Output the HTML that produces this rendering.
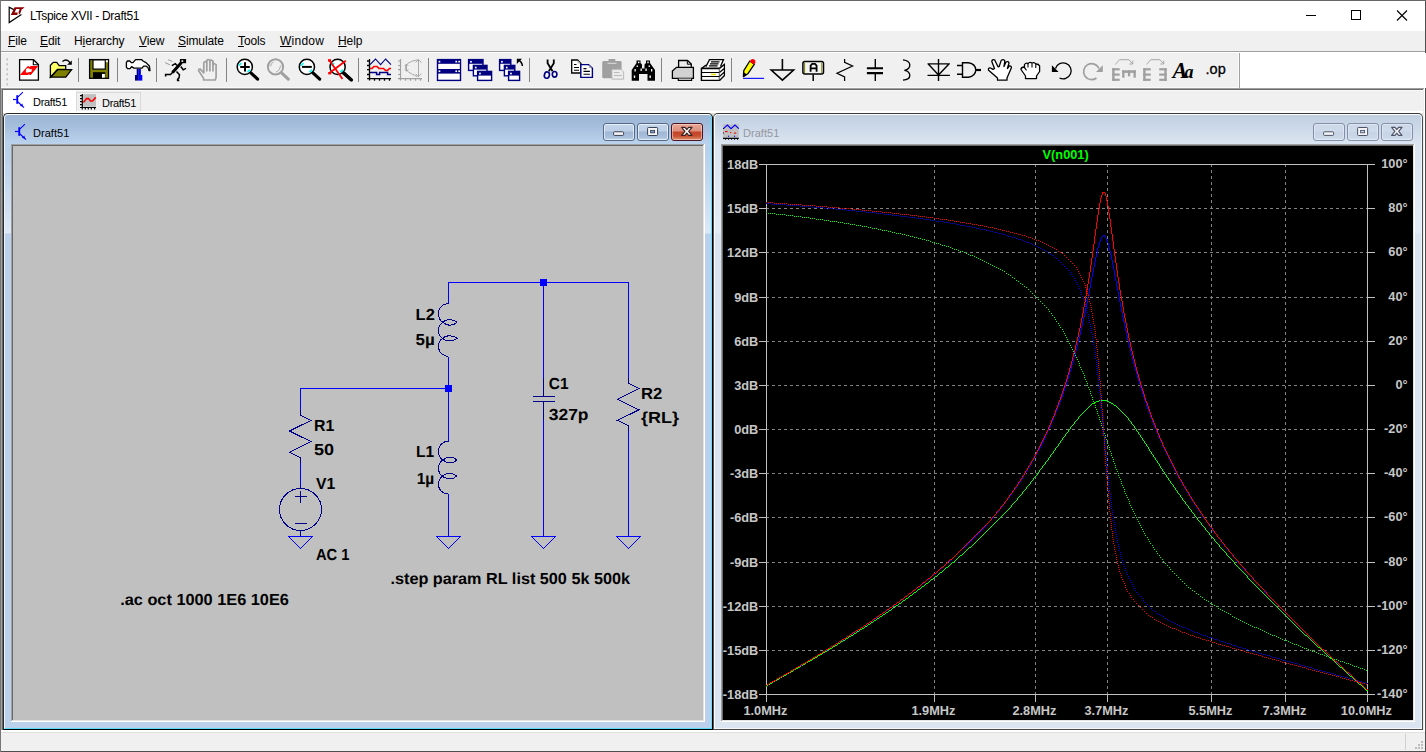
<!DOCTYPE html>
<html><head><meta charset="utf-8"><title>LTspice XVII - Draft51</title>
<style>
*{margin:0;padding:0;box-sizing:border-box}
html,body{width:1426px;height:752px;overflow:hidden;background:#f0f0f0}
body{position:relative;font-family:"Liberation Sans",sans-serif;font-size:12px;color:#000}
.abs{position:absolute}
#title{position:absolute;left:1px;top:1px;width:1424px;height:30px;background:#fff}
#title .t{position:absolute;left:29px;top:8px;font-size:12px;line-height:14px;letter-spacing:-0.3px;white-space:nowrap}
#menu{position:absolute;left:1px;top:31px;width:1424px;height:20px;background:#f0f0f0}
#menu span{position:absolute;top:3px;font-size:12px;line-height:14px;white-space:nowrap;letter-spacing:-0.1px}
#menu u{text-decoration:underline;text-underline-offset:1px}
.sep{position:absolute;top:59px;width:1px;height:24px;background:#8d8d8d}
.tabt{position:absolute;font-size:11px;line-height:13px;white-space:nowrap;letter-spacing:-0.3px}
.win{position:absolute;border:1px solid #2b2b2b;border-radius:5px 5px 0 0;overflow:hidden}
.win .hl{position:absolute;left:0;top:0;right:0;bottom:0;border:1px solid #fff;border-radius:4px 4px 0 0}
.wtitle{position:absolute;font-size:11px;line-height:13px;white-space:nowrap;letter-spacing:0.05px}
.cbtn{position:absolute;top:123px;width:32px;height:18px;border-radius:3px}

#schsvg text{font-family:"Liberation Sans",sans-serif;font-weight:bold;font-size:16px;text-rendering:geometricPrecision;fill:#000}
</style></head>
<body>
<div class="abs" style="left:0px;top:0px;width:1426px;height:752px;background:#4f4f4f;"></div>
<div class="abs" style="left:0px;top:0px;width:1426px;height:1px;background:#686868;"></div>
<div class="abs" style="left:0px;top:0px;width:1px;height:752px;background:#777;"></div>
<div class="abs" style="left:1px;top:1px;width:1424px;height:750px;background:#f0f0f0;"></div>
<div id="title"><div class="t">LTspice XVII - Draft51</div></div>
<svg class="abs" style="left:1290px;top:1px" width="135" height="30" viewBox="0 0 135 30" shape-rendering="crispEdges"><rect x="16" y="14" width="10" height="1" fill="#000"/><rect x="61.5" y="9.5" width="9" height="9" fill="none" stroke="#000" stroke-width="1"/><g shape-rendering="auto" stroke="#000" stroke-width="1.1" fill="none"><path d="M107 9.5 L117 19.5 M117 9.5 L107 19.5"/></g></svg>
<div id="menu"><span style="left:7px"><u>F</u>ile</span><span style="left:39px"><u>E</u>dit</span><span style="left:73px">H<u>i</u>erarchy</span><span style="left:138px"><u>V</u>iew</span><span style="left:177px"><u>S</u>imulate</span><span style="left:237px"><u>T</u>ools</span><span style="left:279px"><span style="position:static;letter-spacing:0.25px"><u>W</u>indow</span></span><span style="left:337px"><u>H</u>elp</span></div>
<div class="abs" style="left:1px;top:51px;width:1424px;height:1px;background:#a0a0a0;"></div>
<div class="abs" style="left:1px;top:52px;width:1424px;height:1px;background:#fff;"></div>
<div class="abs" style="left:1px;top:53px;width:1237px;height:34px;background:#f0f0f0;"></div>
<div class="abs" style="left:1px;top:87px;width:1237px;height:1px;background:#fafafa;"></div>
<div class="abs" style="left:1238px;top:53px;width:1px;height:35px;background:#fafafa;"></div>
<div class="abs" style="left:1239px;top:53px;width:1px;height:35px;background:#a0a0a0;"></div>
<div class="abs" style="left:1240px;top:53px;width:1185px;height:35px;background:#fff;"></div>
<div class="abs" style="left:1px;top:88px;width:1424px;height:1px;background:#a0a0a0;"></div>
<div class="abs" style="left:1px;top:89px;width:1424px;height:1px;background:#696969;"></div>
<div class="abs" style="left:1px;top:90px;width:1424px;height:1px;background:#f9f9f9;"></div>
<div class="abs" style="left:1px;top:89px;width:1px;height:643px;background:#a0a0a0;"></div>
<div class="abs" style="left:2px;top:90px;width:1px;height:641px;background:#696969;"></div>
<div class="abs" style="left:1424px;top:88px;width:1px;height:644px;background:#fff;"></div>
<div class="abs" style="left:1423px;top:89px;width:1px;height:642px;background:#ececec;"></div>
<div class="abs" style="left:3px;top:90px;width:73px;height:23px;background:#fff;"></div>
<div class="abs" style="left:3px;top:111px;width:1420px;height:2px;background:#fff;"></div>
<div class="abs" style="left:76px;top:92px;width:65px;height:19px;background:#f0f0f0;border:1px solid #d9d9d9;border-bottom:none"></div>
<div class="tabt" style="left:33px;top:95.5px">Draft51</div>
<div class="tabt" style="left:102px;top:97px">Draft51</div>
<div class="abs" style="left:3px;top:113px;width:1420px;height:6px;background:#e2dfd0;"></div>
<div class="win" style="left:3px;top:113px;width:710px;height:617px;background:linear-gradient(#9ab4d4 0px,#a5bedc 12px,#b3cae6 22px,#bbd2ec 30px,#b8cfea 34px,#c4d8ef 70px,#dce8f6 119px,#bad0eb 120px,#bbd1eb 616px);border-color:#2a2a2a #000 #000 #2a2a2a"><div class="hl" style="border-color:#fdfeff #5fdcfb #5fdcfb #eef5fc"></div></div><div class="abs" style="left:11px;top:144px;width:694px;height:578px;background:#fff;"></div><div class="abs" style="left:11px;top:144px;width:693px;height:577px;background:#a0a0a0;"></div><div class="abs" style="left:12px;top:145px;width:692px;height:576px;background:#e3e3e3;"></div><div class="abs" style="left:12px;top:145px;width:691px;height:575px;background:#696969;"></div>
<div class="win" style="left:713px;top:113px;width:710px;height:617px;background:linear-gradient(#bfcddf 0px,#c9d6e6 10px,#d4dfec 22px,#dce6f2 31px,#dbe5f2 34px,#e3ecf6 119px,#dae4f1 120px,#dbe5f2 616px);border-color:#3a3a3a #4a4a4a #4a4a4a #555"><div class="hl" style="border-color:#fbfdff #eef4fb #f4f8fd #fbfdff"></div></div><div class="abs" style="left:721px;top:144px;width:694px;height:578px;background:#fff;"></div><div class="abs" style="left:721px;top:144px;width:693px;height:577px;background:#a0a0a0;"></div><div class="abs" style="left:722px;top:145px;width:692px;height:576px;background:#e3e3e3;"></div><div class="abs" style="left:722px;top:145px;width:691px;height:575px;background:#696969;"></div>
<div class="abs" id="sch" style="left:13px;top:146px;width:690px;height:574px;background:#c0c0c0"></div>
<div class="abs" id="plt" style="left:723px;top:146px;width:690px;height:574px;background:#000"></div>
<div class="wtitle" style="left:33px;top:126.5px;color:#000">Draft51</div>
<div class="wtitle" style="left:743px;top:126.5px;color:#9696a0">Draft51</div>
<div class="cbtn" style="left:603px;background:linear-gradient(#c3d5ea 0%,#bccfe6 44%,#9eb7d5 50%,#a9c0dc 80%,#bdd2ea 100%);border:1px solid #566a88;box-shadow:inset 0 0 0 1px rgba(255,255,255,.6)"></div><div class="cbtn" style="left:637px;background:linear-gradient(#c3d5ea 0%,#bccfe6 44%,#9eb7d5 50%,#a9c0dc 80%,#bdd2ea 100%);border:1px solid #566a88;box-shadow:inset 0 0 0 1px rgba(255,255,255,.6)"></div><div class="cbtn" style="left:671px;background:linear-gradient(#eaa898 0%,#dd8e7c 44%,#c4432a 50%,#c8502f 75%,#dc9374 100%);border:1px solid #4a1522;box-shadow:inset 0 0 0 1px rgba(255,220,210,.55)"></div><svg class="abs" style="left:603px;top:123px" width="100" height="18" viewBox="0 0 100 18"><rect x="10.6" y="8.8" width="10" height="3.6" rx="0.8" fill="#f6f6f6" stroke="#3a4256" stroke-width="1"/><rect x="44.6" y="4.5" width="10" height="8" rx="0.8" fill="#f6f6f6" stroke="#3a4256" stroke-width="1"/><rect x="47.6" y="7.4" width="4" height="2.4" fill="#7fa0c8" stroke="#3a4256" stroke-width="0.9"/><path d="M78.6 4.4 L82 4.4 L83.8 6.6 L85.6 4.4 L89 4.4 L85.7 8.4 L89 12.4 L85.6 12.4 L83.8 10.2 L82 12.4 L78.6 12.4 L81.9 8.4 Z" fill="#f6f6f6" stroke="#3a2020" stroke-width="1.1" stroke-linejoin="round"/></svg>
<div class="cbtn" style="left:1313px;background:linear-gradient(#cbd8e8 0%,#cfdbea 44%,#c6d4e5 50%,#cad7e7 80%,#d3deeb 100%);border:1px solid #8490ab;box-shadow:inset 0 0 0 1px rgba(255,255,255,.35)"></div><div class="cbtn" style="left:1347px;background:linear-gradient(#cbd8e8 0%,#cfdbea 44%,#c6d4e5 50%,#cad7e7 80%,#d3deeb 100%);border:1px solid #8490ab;box-shadow:inset 0 0 0 1px rgba(255,255,255,.35)"></div><div class="cbtn" style="left:1381px;background:linear-gradient(#cbd8e8 0%,#cfdbea 44%,#c6d4e5 50%,#cad7e7 80%,#d3deeb 100%);border:1px solid #8490ab;box-shadow:inset 0 0 0 1px rgba(255,255,255,.35)"></div><svg class="abs" style="left:1313px;top:123px" width="100" height="18" viewBox="0 0 100 18"><rect x="10.6" y="8.8" width="10" height="3.6" rx="0.8" fill="#f4f4f6" stroke="#4c5468" stroke-width="1"/><rect x="44.6" y="4.5" width="10" height="8" rx="0.8" fill="#f4f4f6" stroke="#4c5468" stroke-width="1"/><rect x="47.6" y="7.4" width="4" height="2.4" fill="#c5d3e4" stroke="#4c5468" stroke-width="0.9"/><path d="M78.6 4.4 L82 4.4 L83.8 6.6 L85.6 4.4 L89 4.4 L85.7 8.4 L89 12.4 L85.6 12.4 L83.8 10.2 L82 12.4 L78.6 12.4 L81.9 8.4 Z" fill="#f4f4f6" stroke="#4c5468" stroke-width="1.1" stroke-linejoin="round"/></svg>
<div class="abs" style="left:1px;top:730px;width:1424px;height:2px;background:#fff;"></div>
<div class="abs" style="left:1px;top:732px;width:1424px;height:1px;background:#e0e0e0;"></div>
<div class="abs" style="left:1px;top:733px;width:1424px;height:18px;background:#f0f0f0;"></div>
<div class="abs" style="left:1405px;top:734px;width:1px;height:16px;background:#d0d0d0;"></div>
<svg class="abs" style="left:1413px;top:739px" width="12" height="12" shape-rendering="crispEdges"><g fill="#bdbdbd"><rect x="8" y="2" width="2" height="2"/><rect x="5" y="5" width="2" height="2"/><rect x="8" y="5" width="2" height="2"/><rect x="2" y="8" width="2" height="2"/><rect x="5" y="8" width="2" height="2"/><rect x="8" y="8" width="2" height="2"/></g></svg>
<svg class="abs" style="left:0;top:53px" width="1426" height="35" viewBox="0 53 1426 35">
<rect x="6.0" y="58.5" width="2.0" height="2.0" fill="#d2d2d2" stroke="none" stroke-width="1.3"/><rect x="7.0" y="58.5" width="1.0" height="1.0" fill="#b0b0b0" stroke="none" stroke-width="1.3"/>
<rect x="6.0" y="63.5" width="2.0" height="2.0" fill="#d2d2d2" stroke="none" stroke-width="1.3"/><rect x="7.0" y="63.5" width="1.0" height="1.0" fill="#b0b0b0" stroke="none" stroke-width="1.3"/>
<rect x="6.0" y="68.5" width="2.0" height="2.0" fill="#d2d2d2" stroke="none" stroke-width="1.3"/><rect x="7.0" y="68.5" width="1.0" height="1.0" fill="#b0b0b0" stroke="none" stroke-width="1.3"/>
<rect x="6.0" y="73.5" width="2.0" height="2.0" fill="#d2d2d2" stroke="none" stroke-width="1.3"/><rect x="7.0" y="73.5" width="1.0" height="1.0" fill="#b0b0b0" stroke="none" stroke-width="1.3"/>
<rect x="6.0" y="78.5" width="2.0" height="2.0" fill="#d2d2d2" stroke="none" stroke-width="1.3"/><rect x="7.0" y="78.5" width="1.0" height="1.0" fill="#b0b0b0" stroke="none" stroke-width="1.3"/>
<rect x="6.0" y="83.5" width="2.0" height="2.0" fill="#d2d2d2" stroke="none" stroke-width="1.3"/><rect x="7.0" y="83.5" width="1.0" height="1.0" fill="#b0b0b0" stroke="none" stroke-width="1.3"/>
<rect x="78.0" y="58.0" width="1.0" height="24.0" fill="#848484" stroke="none" stroke-width="1.3"/>
<rect x="117.0" y="58.0" width="1.0" height="24.0" fill="#848484" stroke="none" stroke-width="1.3"/>
<rect x="156.0" y="58.0" width="1.0" height="24.0" fill="#848484" stroke="none" stroke-width="1.3"/>
<rect x="226.0" y="58.0" width="1.0" height="24.0" fill="#848484" stroke="none" stroke-width="1.3"/>
<rect x="358.0" y="58.0" width="1.0" height="24.0" fill="#848484" stroke="none" stroke-width="1.3"/>
<rect x="428.0" y="58.0" width="1.0" height="24.0" fill="#848484" stroke="none" stroke-width="1.3"/>
<rect x="529.0" y="58.0" width="1.0" height="24.0" fill="#848484" stroke="none" stroke-width="1.3"/>
<rect x="661.0" y="58.0" width="1.0" height="24.0" fill="#848484" stroke="none" stroke-width="1.3"/>
<rect x="731.0" y="58.0" width="1.0" height="24.0" fill="#848484" stroke="none" stroke-width="1.3"/>
<path d="M19.6 59.7 H33.5 L38.4 64.6 V80.1 H19.6 Z" fill="#fff" stroke="#000" stroke-width="1.3" />
<path d="M33.3 59.9 V64.8 H38.2" fill="none" stroke="#000" stroke-width="1.1" />
<path d="M19.9 74.9 L27.5 66.2 L29.2 65.9 L28.5 67.3 L31 65.9 H38.3 L30.8 74.9 H29 L29.8 73.5 L27.8 74.9 Z M26 69.2 L27.2 68.3 H29 L30 69.2 H32.3 L31.2 72 H29.2 L28.4 72.5 H25.8 Z" fill="#ff0000" fill-rule="evenodd"/>
<path d="M50.4 77.2 V65.2 L53.3 62.4 H56.7 L59.2 65.6 H65.7 V69.5 H57.5 Z" fill="#ffff66" stroke="#000" stroke-width="1.3" />
<path d="M50.6 77.2 L57.6 69.7 H71.6 L65.8 77.2 Z" fill="#808000" stroke="#000" stroke-width="1.3" />
<path d="M62.5 61.5 Q66 58.5 69 61.5 L70.3 63.5" fill="none" stroke="#000" stroke-width="1.3" />
<path d="M67 64.8 H71.8 V60.5 Z" fill="#000"/>
<rect x="89.6" y="59.6" width="18.9" height="18.7" fill="#808000" stroke="#000" stroke-width="1.3"/>
<rect x="93.0" y="59.9" width="12.3" height="9.2" fill="#fff" stroke="#000" stroke-width="1.2"/>
<rect x="105.9" y="60.3" width="2.0" height="1.9" fill="#fff" stroke="none" stroke-width="1.3"/>
<rect x="93.0" y="72.2" width="12.3" height="5.9" fill="#000" stroke="none" stroke-width="1.3"/>
<rect x="102.0" y="73.9" width="2.9" height="3.8" fill="#fff" stroke="none" stroke-width="1.3"/>
<path d="M127.5 61 H129.8 L131.3 62.6 H133 L135.6 59.6 H141.5 L143 61 L146 62.6 L149.4 66 L150 70.6 H149 L148 67.6 L146 66.1 H143.6 L142 68.1 H134 L131.6 66.6 L130 68.6 H127.5 L126.4 67.2 V62.4 Z" fill="#fff" stroke="#000" stroke-width="1.3" stroke-linejoin="round"/>
<rect x="136.7" y="68.9" width="2.1" height="6.2" fill="#000080" stroke="none" stroke-width="1.3"/><rect x="138.8" y="68.9" width="2.1" height="6.2" fill="#0000ff" stroke="none" stroke-width="1.3"/><rect x="135.0" y="75.0" width="3.8" height="5.6" fill="#000080" stroke="none" stroke-width="1.3"/><rect x="138.8" y="75.0" width="3.5" height="5.6" fill="#0000ff" stroke="none" stroke-width="1.3"/>
<rect x="179.9" y="59.0" width="6.2" height="4.2" fill="#000" stroke="none" stroke-width="1.3"/><rect x="181.5" y="60.3" width="1.7" height="1.6" fill="#fff" stroke="none" stroke-width="1.3"/>
<path d="M181.5 62.5 L172.5 72.5" fill="none" stroke="#000" stroke-width="3.1" />
<path d="M177 65.5 L175.3 63.7 L171.8 65.6" fill="none" stroke="#000" stroke-width="1.5" />
<path d="M180.8 66.5 L183.2 69.8 L186 68.4" fill="none" stroke="#000" stroke-width="1.5" />
<path d="M173 72 L170.5 74.6 H165.6 V76.6" fill="none" stroke="#000" stroke-width="1.5" />
<path d="M176.5 71.5 L179.5 74.8 L179 77.8 L177.6 79.4 V80.4 H179.3" fill="none" stroke="#000" stroke-width="1.5" />
<path d="M168 59.6 L172.5 61.6 M165 62.6 L170 64.8" fill="none" stroke="#909090" stroke-width="0.9" />
<path d="M203.6 80 V78.4 L198.7 70.8 Q198.2 68.8 200.3 69.1 L203.8 72.8 V62.8 Q205.3 60.6 206.8 62.4 V60.4 Q208.4 58.6 209.9 60.4 V61 Q211.5 59.2 213 61.2 V64.6 Q214.6 62.8 216.1 64.8 V77.4 L215.2 80 Z" fill="none" stroke="#a0a0a0" stroke-width="1.7" stroke-linejoin="round"/>
<path d="M206.8 62.4 V71.5 M209.9 60.6 V71.5 M213 61.5 V71.5" fill="none" stroke="#a0a0a0" stroke-width="1.7" />
<circle cx="244.8" cy="66.9" r="7.6" fill="#fff" stroke="#000" stroke-width="1.5"/><path d="M238.8 65.6 l2.6 -2.4" fill="none" stroke="#00ffff" stroke-width="1.6" /><path d="M247.4 72.1 l2.8 -2.4" fill="none" stroke="#00ffff" stroke-width="1.6" /><path d="M251.1 73.1 L257.6 79.1" fill="none" stroke="#000" stroke-width="3.2" stroke-linecap="round"/>
<path d="M240.2 66.9 H249.8 M245 62.2 V71.6" fill="none" stroke="#000" stroke-width="2" />
<circle cx="275.5" cy="66.9" r="7.6" fill="none" stroke="#a0a0a0" stroke-width="2"/><path d="M270.5 66.4 q0.5 -3.5 3 -4.5 M276.0 72.1 q3.5 -1 4.5 -6.5" fill="none" stroke="#a0a0a0" stroke-width="0.9" /><path d="M281.8 73.1 L288.3 79.1" fill="none" stroke="#a0a0a0" stroke-width="3.2" stroke-linecap="round"/>
<circle cx="306.9" cy="66.9" r="7.6" fill="#fff" stroke="#000" stroke-width="1.5"/><path d="M300.9 65.6 l2.6 -2.4" fill="none" stroke="#00ffff" stroke-width="1.6" /><path d="M309.5 72.1 l2.8 -2.4" fill="none" stroke="#00ffff" stroke-width="1.6" /><path d="M313.2 73.1 L319.7 79.1" fill="none" stroke="#000" stroke-width="3.2" stroke-linecap="round"/>
<path d="M302 66.9 H311.8" fill="none" stroke="#000" stroke-width="2" />
<circle cx="337.6" cy="66.9" r="7.6" fill="#fff" stroke="#000" stroke-width="1.5"/><path d="M331.6 65.6 l2.6 -2.4" fill="none" stroke="#00ffff" stroke-width="1.6" /><path d="M340.2 72.1 l2.8 -2.4" fill="none" stroke="#00ffff" stroke-width="1.6" /><path d="M343.9 73.1 L350.4 79.1" fill="none" stroke="#000" stroke-width="3.2" stroke-linecap="round"/>
<path d="M329.5 60.5 L342.5 79 M345.8 60.8 L329.5 73" fill="none" stroke="#ff0000" stroke-width="1.8" />
<rect x="328.0" y="59.2" width="3.0" height="2.4" fill="#ff0000" stroke="none" stroke-width="1.3"/><rect x="328.2" y="72.0" width="3.0" height="2.4" fill="#ff0000" stroke="none" stroke-width="1.3"/><path d="M343.5 73 L351.5 80" fill="none" stroke="#000" stroke-width="3.2" stroke-linecap="round"/>
<path d="M369.5 59 V80.6 M367.1 78.7 H391 M367 61 h2.5 M367 65.5 h2.5 M367 69.6 h2.5 M367 74.5 h2.5 M374.5 78.7 v2 M379.5 78.7 v2 M384.5 78.7 v2 M389.5 78.7 v2" fill="none" stroke="#000" stroke-width="1.3" />
<path d="M370 64.6 L375.5 59 L380.6 64.6 L385.6 59 L391 64.6" fill="none" stroke="#000080" stroke-width="1.1" />
<path d="M370 68.4 H372 L374 66.4 H377 L379 68.4 H383.5 L385.5 70.4 H387.5 L389.5 68.4 H391" fill="none" stroke="#ff0000" stroke-width="1.5" />
<path d="M370 72.4 H376.6 V74.6 H379.6 V72.4 H387.6 V74.6 H391" fill="none" stroke="#000080" stroke-width="1.5" />
<path d="M400.5 59 V80.6 M398 78.7 H422 M398 61 h2.5 M398 65.5 h2.5 M398 69.6 h2.5 M398 74.5 h2.5 M405.5 78.7 v2 M410.5 78.7 v2 M415.5 78.7 v2 M420.5 78.7 v2" fill="none" stroke="#a0a0a0" stroke-width="1.2" />
<path d="M417.5 59.6 Q404 63 405.5 68 Q406 72 417.5 76.6 M418.5 59.6 V76.6 M415.6 62.5 L418.5 59.6 L421.4 62.5 M415.6 73.7 L418.5 76.6 L421.4 73.7 M406.5 64 V71.2 M404.6 66 L406.5 64 L408.4 66 M404.6 69.2 L406.5 71.2 L408.4 69.2" fill="none" stroke="#a0a0a0" stroke-width="0.9" />
<rect x="437.5" y="59.6" width="23.0" height="20.8" fill="#fff" stroke="#000080" stroke-width="1.4"/>
<rect x="437.5" y="59.6" width="23.0" height="4.2" fill="#000080" stroke="none" stroke-width="1.3"/><rect x="437.5" y="69.0" width="23.0" height="4.6" fill="#000080" stroke="none" stroke-width="1.3"/>
<rect x="438.6" y="60.8" width="1.7" height="1.7" fill="#fff" stroke="none" stroke-width="1.3"/><rect x="455.4" y="60.8" width="1.7" height="1.7" fill="#fff" stroke="none" stroke-width="1.3"/><rect x="458.3" y="60.8" width="1.7" height="1.7" fill="#fff" stroke="none" stroke-width="1.3"/>
<rect x="438.6" y="70.4" width="1.7" height="1.7" fill="#fff" stroke="none" stroke-width="1.3"/><rect x="455.4" y="70.4" width="1.7" height="1.7" fill="#fff" stroke="none" stroke-width="1.3"/><rect x="458.3" y="70.4" width="1.7" height="1.7" fill="#fff" stroke="none" stroke-width="1.3"/>
<rect x="468.6" y="59.6" width="14.4" height="10.8" fill="#fff" stroke="#000080" stroke-width="1.4"/><rect x="468.6" y="59.6" width="14.4" height="4.2" fill="#000080" stroke="none" stroke-width="1.3"/><rect x="470.1" y="60.9" width="1.7" height="1.7" fill="#fff" stroke="none" stroke-width="1.3"/><rect x="473.4" y="65.4" width="13.6" height="10.4" fill="#fff" stroke="#000080" stroke-width="1.4"/><rect x="473.4" y="65.4" width="13.6" height="4.2" fill="#000080" stroke="none" stroke-width="1.3"/><rect x="474.9" y="66.7" width="1.7" height="1.7" fill="#fff" stroke="none" stroke-width="1.3"/><rect x="477.6" y="71.4" width="14.0" height="9.0" fill="#fff" stroke="#000080" stroke-width="1.4"/><rect x="477.6" y="71.4" width="14.0" height="4.2" fill="#000080" stroke="none" stroke-width="1.3"/><rect x="479.1" y="72.7" width="1.7" height="1.7" fill="#fff" stroke="none" stroke-width="1.3"/>
<rect x="499.6" y="59.6" width="11.2" height="10.8" fill="#fff" stroke="#000080" stroke-width="1.4"/><rect x="499.6" y="59.6" width="11.2" height="4.2" fill="#000080" stroke="none" stroke-width="1.3"/><rect x="501.1" y="60.9" width="1.7" height="1.7" fill="#fff" stroke="none" stroke-width="1.3"/><rect x="504.4" y="65.4" width="10.4" height="10.4" fill="#fff" stroke="#000080" stroke-width="1.4"/><rect x="504.4" y="65.4" width="10.4" height="4.2" fill="#000080" stroke="none" stroke-width="1.3"/><rect x="505.9" y="66.7" width="1.7" height="1.7" fill="#fff" stroke="none" stroke-width="1.3"/><rect x="508.6" y="71.4" width="11.0" height="9.0" fill="#fff" stroke="#000080" stroke-width="1.4"/><rect x="508.6" y="71.4" width="11.0" height="4.2" fill="#000080" stroke="none" stroke-width="1.3"/><rect x="510.1" y="72.7" width="1.7" height="1.7" fill="#fff" stroke="none" stroke-width="1.3"/>
<path d="M518 60 Q522 61.5 522.4 66" fill="none" stroke="#000" stroke-width="1.5" /><path d="M516.8 58.8 H522 L516.8 64 Z" fill="#000"/>
<path d="M547.6 59.5 V63.2 L552.6 71.2 M553.8 59.5 V63.2 L548.8 71.2" fill="none" stroke="#000" stroke-width="1.8" />
<ellipse cx="546.9" cy="75.1" rx="2.5" ry="3.2" fill="#f4f4f4" stroke="#000080" stroke-width="1.6" transform="rotate(15 547 75)"/><ellipse cx="554.6" cy="74.3" rx="2.3" ry="2.8" fill="#f4f4f4" stroke="#000080" stroke-width="1.6"/>
<path d="M571.7 60 H577.5 L581 63.5 V73 H571.7 Z" fill="#fff" stroke="#000" stroke-width="1.3" /><path d="M574 64.5 h2.5 M574 67.5 h5 M574 70.3 h5" fill="none" stroke="#000" stroke-width="1.1" />
<path d="M577.7 60.3 V63.3 H580.7 Z" fill="#b0b0b0"/>
<path d="M580.8 64.6 H588.6 L592.4 68.2 V77.4 H580.8 Z" fill="#fff" stroke="#000080" stroke-width="1.4" /><path d="M583.5 68.6 h3 M583.5 71.4 h6.4 M583.5 74.3 h6.4" fill="none" stroke="#000" stroke-width="1.1" />
<path d="M589 65 V68 H592 Z" fill="#b0b0b0"/>
<rect x="602.2" y="61" width="19.4" height="17.2" rx="1.5" fill="#a0a0a0"/><rect x="608.5" y="59.0" width="6.8" height="3.0" fill="#a0a0a0" stroke="none" stroke-width="1.3"/><path d="M607.5 63.3 h9" fill="none" stroke="#e4e4e4" stroke-width="0.9" />
<path d="M611.9 69.3 H621 L623.6 71.8 V79.2 H611.9 Z" fill="#ececec" stroke="#b4b4b4" stroke-width="0.9" /><path d="M614 72.5 h5.5 M614 75.5 h8" fill="none" stroke="#b4b4b4" stroke-width="0.9" />
<path d="M636.5 60.5 H640.5 V63 L642 64.5 V68.5 H644.5 V64.5 L646 63 V60.5 H650 V63 L655 70 V80.8 H647.5 V74 H639 V80.8 H631.7 V70 L636.5 63 Z" fill="#000"/>
<rect x="638.0" y="61.6" width="1.4" height="1.6" fill="#fff" stroke="none" stroke-width="1.3"/><rect x="647.3" y="61.6" width="1.4" height="1.6" fill="#fff" stroke="none" stroke-width="1.3"/><rect x="636.6" y="65.5" width="1.3" height="1.5" fill="#fff" stroke="none" stroke-width="1.3"/><rect x="648.6" y="65.5" width="1.3" height="1.5" fill="#fff" stroke="none" stroke-width="1.3"/><rect x="634.5" y="69.0" width="1.3" height="2.5" fill="#fff" stroke="none" stroke-width="1.3"/><rect x="640.5" y="68.5" width="1.3" height="2.5" fill="#fff" stroke="none" stroke-width="1.3"/><rect x="645.4" y="68.5" width="1.3" height="2.5" fill="#fff" stroke="none" stroke-width="1.3"/><rect x="651.0" y="69.0" width="1.3" height="2.5" fill="#fff" stroke="none" stroke-width="1.3"/><rect x="633.8" y="75.5" width="1.4" height="2.4" fill="#fff" stroke="none" stroke-width="1.3"/><rect x="649.5" y="75.5" width="1.4" height="2.4" fill="#fff" stroke="none" stroke-width="1.3"/>
<path d="M678.6 67 V60.5 H687.5 L691.3 64 V67" fill="#ececec" stroke="#000" stroke-width="1.3" />
<path d="M672.4 71 L676.5 67.3 H693.4 V78.4 H672.4 Z" fill="#d2d2d2" stroke="#000" stroke-width="1.3" />
<path d="M678.3 78.6 V80.4 H691.6 V78.6" fill="#fff" stroke="#000" stroke-width="1.2" /><path d="M687.3 60.8 V64.2 H691" fill="none" stroke="#000" stroke-width="1" />
<path d="M706 66.5 L709.5 59.6 H723.5 L720.5 66.5" fill="#fff" stroke="#000" stroke-width="1.3" /><path d="M711 61.8 h8.5 M710 63.8 h8.5 M709 65.8 h8.5" fill="none" stroke="#000" stroke-width="1.2" />
<path d="M701.5 68.5 L705.5 65.5 H707 M719.5 68.5 L724.4 64.5 V75.5 L719.5 80.4 H701.5 V68.5 H719.5 V80.4 M701.5 72.5 H719.5 L724.4 68 M701.5 76.5 H719.5 L724.4 72" fill="none" stroke="#000" stroke-width="1.3" />
<path d="M701.5 68.5 H719.5 V80.4 H701.5 Z" fill="#fff" stroke="#000" stroke-width="1.3" /><path d="M701.5 72.5 H719.5 M701.5 76.5 H719.5" fill="none" stroke="#000" stroke-width="1.2" /><path d="M719.5 68.5 L724.4 64.5 V75.5 L719.5 80.4 M719.5 72.5 L724.4 68.3 M719.5 76.5 L724.4 72" fill="#fff" stroke="#000" stroke-width="1.2" />
<rect x="711.0" y="73.7" width="5.0" height="1.5" fill="#e8e000" stroke="none" stroke-width="1.3"/>
<path d="M749.8 61 L754.4 64.2 L747.8 73.8 L743.4 76.6 L743.8 70.6 Z" fill="#ffff00" stroke="#000" stroke-width="1.3" stroke-linejoin="round"/>
<path d="M743.4 76.8 L743.7 72.2 L747 74.4 Z" fill="#000"/>
<path d="M749.6 61.6 L751.2 59.4 Q753.5 58.4 755.2 60.5 L755.4 62.6 L754.2 64.6 Z" fill="#ff0000"/>
<rect x="743.1" y="77.8" width="21.0" height="1.1" fill="#0000ff" stroke="none" stroke-width="1.3"/>
<path d="M782.4 59 V70 M771.2 70 H793.6 L782.4 80.2 Z" fill="none" stroke="#000" stroke-width="1.6" stroke-linejoin="miter"/>
<rect x="802.9" y="61.4" width="20.6" height="12.6" rx="2" fill="#f4f4f4" stroke="#000" stroke-width="1.5"/>
<path d="M804.6 62.5 V73 M821.8 62.5 V73" fill="none" stroke="#808000" stroke-width="1" />
<path d="M813.2 74.5 V80.9" fill="none" stroke="#000" stroke-width="1.5" />
<path d="M810.6 71.8 V65.6 L812.2 63.9 H815 L816.6 65.6 V71.8 M810.6 68.3 H816.6" fill="none" stroke="#000" stroke-width="1.8" />
<path d="M844.6 59 V62.3 L852.6 66 L837 73.3 L844.6 76.9 V80.9" fill="none" stroke="#000" stroke-width="1.25" />
<path d="M875.3 59 V68 M875.3 73 V80.9" fill="none" stroke="#000" stroke-width="1.4" /><path d="M866.9 68.2 H883 M866.9 73.1 H883" fill="none" stroke="#000" stroke-width="2.1" />
<path d="M903 59.8 Q909.8 60.6 909.8 65 Q909.8 69.4 904.4 70.3 Q909.8 71.2 909.8 75.6 Q909.8 79.6 903 80.2" fill="none" stroke="#000" stroke-width="1.35" />
<path d="M938.5 59 V80.9 M927.5 63.9 H949.9 M927.5 75.4 H949.9 M928.5 64.2 L938.5 75 L948.7 64.2" fill="none" stroke="#000" stroke-width="1.4" />
<path d="M962.5 62.8 H968.5 Q975.5 64 975.8 70 Q975.5 76 968.5 77.2 H962.5 Z" fill="none" stroke="#000" stroke-width="1.4" /><path d="M957 65.5 H962.5 M957 74.2 H962.5" fill="none" stroke="#000" stroke-width="1.4" /><path d="M975.8 70 H981" fill="none" stroke="#000" stroke-width="2.2" />
<path d="M997.5 80.2 V78 L988.6 70.2 Q987.8 68 990 67.8 L993 69.4 L994.5 68.5 L991.8 61.5 Q992 59 994.6 59.8 L998 66.8 L999.2 66.5 L1001.2 60.4 Q1003.5 58.6 1004.8 60.8 L1004 66.5 L1006 62 Q1008.2 60.8 1009 63 L1007.4 68.5 L1009.3 66 Q1011.4 65.6 1011.4 67.8 L1007 78 V80.2 Z" fill="#fff" stroke="#000" stroke-width="1.3" stroke-linejoin="round"/>
<path d="M1025.5 78.6 V76 L1021 69.5 Q1021 67.5 1023.5 67 L1024.5 67.6 V64.5 Q1026 62.3 1028 63.6 Q1029.6 61.4 1032 63 Q1034.5 61.8 1035.8 64 Q1038.6 63.8 1039.6 66 V71.5 L1036.5 76 V78.6 Z" fill="#fff" stroke="#000" stroke-width="1.3" stroke-linejoin="round"/>
<path d="M1028 63.8 V67.5 M1032 63.2 V67.5 M1035.8 64.2 V68 M1024.5 67.6 L1026.5 70.3" fill="none" stroke="#000" stroke-width="1.1" />
<path d="M1055.5 68.5 A8 8 0 1 1 1059.5 78" fill="none" stroke="#000" stroke-width="1.3" /><path d="M1051.9 65.2 V72 H1058.6 Z" fill="#000"/>
<path d="M1099 68.5 A8 8 0 1 0 1096.5 78" fill="none" stroke="#a0a0a0" stroke-width="1.7" /><path d="M1102.8 65.2 V72 H1096 Z" fill="#a0a0a0"/>
<rect x="1112.2" y="68.2" width="2.4" height="12.7" fill="#a0a0a0" stroke="none" stroke-width="1.3"/><rect x="1112.2" y="68.2" width="7.5" height="2.2" fill="#a0a0a0" stroke="none" stroke-width="1.3"/><rect x="1112.2" y="73.5" width="7.5" height="2.2" fill="#a0a0a0" stroke="none" stroke-width="1.3"/><rect x="1112.2" y="78.7" width="7.5" height="2.2" fill="#a0a0a0" stroke="none" stroke-width="1.3"/>
<rect x="1122.2" y="70.3" width="13.6" height="2.6" fill="#a0a0a0" stroke="none" stroke-width="1.3"/><rect x="1122.2" y="70.3" width="2.3" height="7.4" fill="#a0a0a0" stroke="none" stroke-width="1.3"/><rect x="1127.9" y="70.3" width="2.3" height="6.0" fill="#a0a0a0" stroke="none" stroke-width="1.3"/><rect x="1133.5" y="70.3" width="2.3" height="7.4" fill="#a0a0a0" stroke="none" stroke-width="1.3"/>
<path d="M1115.3 64.5 L1119.5 59.7 H1129 L1132.6 63.8 M1132.8 60.6 V64 H1129.2" fill="none" stroke="#a0a0a0" stroke-width="0.9" />
<rect x="1143.2" y="68.2" width="2.4" height="12.7" fill="#a0a0a0" stroke="none" stroke-width="1.3"/><rect x="1143.2" y="68.2" width="7.5" height="2.2" fill="#a0a0a0" stroke="none" stroke-width="1.3"/><rect x="1143.2" y="73.5" width="7.5" height="2.2" fill="#a0a0a0" stroke="none" stroke-width="1.3"/><rect x="1143.2" y="78.7" width="7.5" height="2.2" fill="#a0a0a0" stroke="none" stroke-width="1.3"/><rect x="1164.3" y="68.2" width="2.4" height="12.7" fill="#a0a0a0" stroke="none" stroke-width="1.3"/><rect x="1159.2" y="68.2" width="7.5" height="2.2" fill="#a0a0a0" stroke="none" stroke-width="1.3"/><rect x="1159.2" y="73.5" width="7.5" height="2.2" fill="#a0a0a0" stroke="none" stroke-width="1.3"/><rect x="1159.2" y="78.7" width="7.5" height="2.2" fill="#a0a0a0" stroke="none" stroke-width="1.3"/>
<path d="M1146.5 64.5 L1150.7 59.7 H1160 L1163.6 63.8 M1163.8 60.6 V64 H1160.2" fill="none" stroke="#a0a0a0" stroke-width="0.9" />
<text x="1172.6" y="77.8" font-family="Liberation Serif,serif" font-weight="bold" font-style="italic" font-size="22.5" fill="#000">A<tspan dx="-3.2" font-size="18">a</tspan></text>
<text x="1205.6" y="73.9" font-family="Liberation Sans,sans-serif" font-size="14.5" fill="#000" stroke="#000" stroke-width="0.3">.op</text>
</svg>
<svg class="abs" style="left:0;top:0" width="160" height="145" viewBox="0 0 160 145">
<path d="M13.8 9.6 L9.2 7.2 V22.6 L21.4 14.6" fill="none" stroke="#000" stroke-width="1.2" />
<path d="M14.6 7.2 H17 L14.6 12.4 L17.6 12.6 L17.4 14.9 H10.8 Z M16.8 7.2 H24.6 L22.6 8.9 H21.9 L19.8 14.6 L18.4 13 L19.6 8.9 H16.2 Z" fill="#8b0000"/>
<path d="M13.0 99.5 H16.6" fill="none" stroke="#0000ff" stroke-width="1.2" /><rect x="16.3" y="95.2" width="1.9" height="8.6" fill="#0000ff" stroke="none" stroke-width="1.3"/><path d="M18.0 96.8 L22.9 92.2 M18.0 102.0 L24.0 107.6" fill="none" stroke="#0000ff" stroke-width="1.1" /><path d="M23.0 106.6 l-3.2 -0.6 l2.6 -2.6 Z" fill="#0000ff"/>
<path d="M15.0 131.5 H18.6" fill="none" stroke="#0000ff" stroke-width="1.2" /><rect x="18.3" y="127.2" width="1.9" height="8.6" fill="#0000ff" stroke="none" stroke-width="1.3"/><path d="M20.0 128.8 L24.9 124.2 M20.0 134.0 L26.0 139.6" fill="none" stroke="#0000ff" stroke-width="1.1" /><path d="M25.0 138.6 l-3.2 -0.6 l2.6 -2.6 Z" fill="#0000ff"/>
<rect x="83.2" y="94.1" width="12.8" height="12.6" fill="#c0c0c0" stroke="none" stroke-width="1.3"/>
<path d="M82.3 94 V109.6 M80 107.5 H96 M80 95.6 h2.3 M80 98.6 h2.3 M80 101.6 h2.3 M80 104.6 h2.3 M85.3 107.5 v2.1 M88.3 107.5 v2.1 M91.3 107.5 v2.1 M94.6 107.5 v2.1" fill="none" stroke="#000" stroke-width="1.2" />
<path d="M83.4 102.6 L86.5 98.6 H88.5 L90.5 101 H92.5 L95.8 97.4" fill="none" stroke="#ff0000" stroke-width="1.6" />
</svg>
<svg class="abs" style="left:720px;top:120px" width="24" height="24" viewBox="720 120 24 24">
<rect x="723.0" y="124.1" width="15.8" height="14.0" fill="#c0c0c0" stroke="none" stroke-width="1.3"/>
<path d="M723.4 128.6 L727.4 125 L731 128.6 L735 125 L738.8 128.6" fill="none" stroke="#0000ff" stroke-width="1.2" />
<rect x="725.0" y="131.0" width="2.6" height="1.1" fill="#ff0000" stroke="none" stroke-width="1.3"/><rect x="730.0" y="132.0" width="1.2" height="1.1" fill="#ff0000" stroke="none" stroke-width="1.3"/><rect x="734.0" y="132.5" width="2.2" height="1.1" fill="#ff0000" stroke="none" stroke-width="1.3"/><rect x="728.0" y="135.7" width="1.1" height="1.1" fill="#0000ff" stroke="none" stroke-width="1.3"/><rect x="734.0" y="135.7" width="1.1" height="1.1" fill="#0000ff" stroke="none" stroke-width="1.3"/><rect x="723.0" y="128.0" width="1.0" height="1.0" fill="#000" stroke="none" stroke-width="1.3"/><rect x="723.0" y="132.5" width="1.0" height="1.0" fill="#000" stroke="none" stroke-width="1.3"/>
<path d="M723 138.4 H738.8 M725 139.3 h1 M728 139.3 h1 M731 139.3 h1 M734 139.3 h1 M737 139.3 h1" fill="none" stroke="#000" stroke-width="1.1" />
</svg>
<svg id="schsvg" class="abs" style="left:12px;top:146px" width="691" height="574" viewBox="12 146 691 574" shape-rendering="crispEdges">
<rect x="448" y="282" width="181" height="1" fill="#0000ff"/>
<rect x="448" y="282" width="1" height="21" fill="#0000ff"/>
<rect x="448" y="357" width="1" height="32" fill="#0000ff"/>
<rect x="448" y="388" width="1" height="53" fill="#0000ff"/>
<rect x="448" y="494" width="1" height="43" fill="#0000ff"/>
<rect x="300" y="388" width="149" height="1" fill="#0000ff"/>
<rect x="300" y="388" width="1" height="22" fill="#0000ff"/>
<rect x="300" y="462" width="1" height="24" fill="#0000ff"/>
<rect x="543" y="282" width="1" height="96" fill="#0000ff"/>
<rect x="543" y="420" width="1" height="117" fill="#0000ff"/>
<rect x="628" y="282" width="1" height="96" fill="#0000ff"/>
<rect x="628" y="431" width="1" height="106" fill="#0000ff"/>
<rect x="540" y="279" width="7" height="7" fill="#0000ff"/>
<rect x="445" y="385" width="7" height="7" fill="#0000ff"/>
<polyline points="436.5,536.5 460.5,536.5 448.5,548.5 436.5,536.5" fill="none" stroke="#0000ff" stroke-width="1" />
<polyline points="531.5,536.5 555.5,536.5 543.5,548.5 531.5,536.5" fill="none" stroke="#0000ff" stroke-width="1" />
<polyline points="616.5,536.5 640.5,536.5 628.5,548.5 616.5,536.5" fill="none" stroke="#0000ff" stroke-width="1" />
<polyline points="288.5,536.5 312.5,536.5 300.5,548.5 288.5,536.5" fill="none" stroke="#0000ff" stroke-width="1" />
<polyline points="300.2,409.8 300.2,415.1 311.0,420.4 289.4,431.0 311.0,441.6 289.4,452.2 300.2,457.5 300.2,462.8" fill="none" stroke="#000088" stroke-width="1" />
<polyline points="628.2,378.0 628.2,383.3 639.0,388.6 617.4,399.2 639.0,409.8 617.4,420.4 628.2,425.7 628.2,431.0" fill="none" stroke="#000088" stroke-width="1" />
<path d="M448.5 303.5 C443.5 303.5 438.5 307.0 438.5 313.5 C438.5 318.0 440.5 321.0 443.0 322.3 C446.5 318.5 453.5 318.8 457.0 322.3 C453.5 326.0 446.5 326.2 443.0 322.3 C440.0 324.0 438.5 327.0 438.5 330.5 C438.5 334.0 440.0 337.0 442.5 338.3 C446.0 334.8 453.5 335.0 457.0 338.3 C453.5 341.7 446.0 342.0 442.5 338.3 C440.0 340.0 438.5 343.0 438.5 347.0 C438.5 353.0 443.5 356.0 448.5 356.5 " fill="none" stroke="#000088" stroke-width="1"/>
<path d="M448.5 441.2 C443.5 441.2 438.5 444.7 438.5 451.2 C438.5 455.7 440.5 458.7 443.0 460.0 C446.5 456.2 453.5 456.5 457.0 460.0 C453.5 463.7 446.5 463.9 443.0 460.0 C440.0 461.7 438.5 464.7 438.5 468.2 C438.5 471.7 440.0 474.7 442.5 476.0 C446.0 472.5 453.5 472.7 457.0 476.0 C453.5 479.4 446.0 479.7 442.5 476.0 C440.0 477.7 438.5 480.7 438.5 484.7 C438.5 490.7 443.5 493.7 448.5 494.2 " fill="none" stroke="#000088" stroke-width="1"/>
<rect x="543" y="378" width="1" height="19" fill="#000088"/>
<rect x="533" y="396" width="22" height="1" fill="#000088"/>
<rect x="533" y="401" width="22" height="1" fill="#000088"/>
<rect x="543" y="401" width="1" height="19" fill="#000088"/>
<rect x="300" y="486" width="1" height="3" fill="#000088"/>
<rect x="300" y="530" width="1" height="6" fill="#000088"/>
<circle cx="300.5" cy="509.5" r="21" fill="none" stroke="#000088" stroke-width="1"/>
<rect x="295" y="496" width="12" height="1" fill="#000088"/>
<rect x="300" y="491" width="1" height="12" fill="#000088"/>
<rect x="295" y="523" width="12" height="1" fill="#000088"/>
<g shape-rendering="auto">
<text x="434.8" y="320.1" textLength="19.2" lengthAdjust="spacingAndGlyphs" text-anchor="end">L2</text>
<text x="434.8" y="345.2" textLength="19.2" lengthAdjust="spacingAndGlyphs" text-anchor="end">5µ</text>
<text x="434.2" y="456.8" textLength="18.2" lengthAdjust="spacingAndGlyphs" text-anchor="end">L1</text>
<text x="434.2" y="484.0" textLength="17.5" lengthAdjust="spacingAndGlyphs" text-anchor="end">1µ</text>
<text x="314.0" y="430.6" textLength="20.3" lengthAdjust="spacingAndGlyphs" text-anchor="start">R1</text>
<text x="314.0" y="454.5" textLength="20.0" lengthAdjust="spacingAndGlyphs" text-anchor="start">50</text>
<text x="316.0" y="488.5" textLength="19.2" lengthAdjust="spacingAndGlyphs" text-anchor="start">V1</text>
<text x="316.0" y="559.5" textLength="33.5" lengthAdjust="spacingAndGlyphs" text-anchor="start">AC 1</text>
<text x="548.8" y="388.6" textLength="19.7" lengthAdjust="spacingAndGlyphs" text-anchor="start">C1</text>
<text x="548.8" y="419.8" textLength="39.7" lengthAdjust="spacingAndGlyphs" text-anchor="start">327p</text>
<text x="641.0" y="398.6" textLength="21.3" lengthAdjust="spacingAndGlyphs" text-anchor="start">R2</text>
<text x="641.0" y="422.6" textLength="38.0" lengthAdjust="spacingAndGlyphs" text-anchor="start">{RL}</text>
<text x="390.5" y="583.6" textLength="239.5" lengthAdjust="spacingAndGlyphs" text-anchor="start">.step param RL list 500 5k 500k</text>
<text x="120.2" y="605.1" textLength="168.7" lengthAdjust="spacingAndGlyphs" text-anchor="start">.ac oct 1000 1E6 10E6</text>
</g></svg>
<svg class="abs" style="left:722px;top:146px" width="691" height="574" viewBox="0 0 691 574" shape-rendering="crispEdges">
<g stroke="#828282" stroke-width="1" stroke-dasharray="3 3"><line x1="44" y1="62.5" x2="645" y2="62.5"/><line x1="44" y1="106.5" x2="645" y2="106.5"/><line x1="44" y1="151.5" x2="645" y2="151.5"/><line x1="44" y1="195.5" x2="645" y2="195.5"/><line x1="44" y1="239.5" x2="645" y2="239.5"/><line x1="44" y1="283.5" x2="645" y2="283.5"/><line x1="44" y1="327.5" x2="645" y2="327.5"/><line x1="44" y1="371.5" x2="645" y2="371.5"/><line x1="44" y1="416.5" x2="645" y2="416.5"/><line x1="44" y1="460.5" x2="645" y2="460.5"/><line x1="44" y1="504.5" x2="645" y2="504.5"/><line x1="212.5" y1="18" x2="212.5" y2="548"/><line x1="313.5" y1="18" x2="313.5" y2="548"/><line x1="385.5" y1="18" x2="385.5" y2="548"/><line x1="489.5" y1="18" x2="489.5" y2="548"/><line x1="563.5" y1="18" x2="563.5" y2="548"/></g>
<g stroke="#c0c0c0" stroke-width="1"><rect x="44.5" y="18.5" width="601" height="530" fill="none"/><line x1="37" y1="18.5" x2="44" y2="18.5"/><line x1="646" y1="18.5" x2="653" y2="18.5"/><line x1="37" y1="62.5" x2="44" y2="62.5"/><line x1="646" y1="62.5" x2="653" y2="62.5"/><line x1="37" y1="106.5" x2="44" y2="106.5"/><line x1="646" y1="106.5" x2="653" y2="106.5"/><line x1="37" y1="151.5" x2="44" y2="151.5"/><line x1="646" y1="151.5" x2="653" y2="151.5"/><line x1="37" y1="195.5" x2="44" y2="195.5"/><line x1="646" y1="195.5" x2="653" y2="195.5"/><line x1="37" y1="239.5" x2="44" y2="239.5"/><line x1="646" y1="239.5" x2="653" y2="239.5"/><line x1="37" y1="283.5" x2="44" y2="283.5"/><line x1="646" y1="283.5" x2="653" y2="283.5"/><line x1="37" y1="327.5" x2="44" y2="327.5"/><line x1="646" y1="327.5" x2="653" y2="327.5"/><line x1="37" y1="371.5" x2="44" y2="371.5"/><line x1="646" y1="371.5" x2="653" y2="371.5"/><line x1="37" y1="416.5" x2="44" y2="416.5"/><line x1="646" y1="416.5" x2="653" y2="416.5"/><line x1="37" y1="460.5" x2="44" y2="460.5"/><line x1="646" y1="460.5" x2="653" y2="460.5"/><line x1="37" y1="504.5" x2="44" y2="504.5"/><line x1="646" y1="504.5" x2="653" y2="504.5"/><line x1="37" y1="548.5" x2="44" y2="548.5"/><line x1="646" y1="548.5" x2="653" y2="548.5"/><line x1="44.5" y1="549" x2="44.5" y2="556"/><line x1="212.5" y1="549" x2="212.5" y2="556"/><line x1="313.5" y1="549" x2="313.5" y2="556"/><line x1="385.5" y1="549" x2="385.5" y2="556"/><line x1="489.5" y1="549" x2="489.5" y2="556"/><line x1="563.5" y1="549" x2="563.5" y2="556"/><line x1="645.5" y1="549" x2="645.5" y2="556"/></g>
<path fill="#00ff00" d="M44 540h1v1h-1zM45 539h1v1h-1zM46 538h2v1h-2zM48 537h2v1h-2zM50 536h1v1h-1zM51 535h2v1h-2zM53 534h2v1h-2zM55 533h2v1h-2zM57 532h1v1h-1zM58 531h2v1h-2zM60 530h2v1h-2zM62 529h2v1h-2zM64 528h1v1h-1zM65 527h2v1h-2zM67 526h2v1h-2zM69 525h2v1h-2zM71 524h1v1h-1zM72 523h2v1h-2zM74 522h2v1h-2zM76 521h2v1h-2zM78 520h1v1h-1zM79 519h2v1h-2zM81 518h2v1h-2zM83 517h1v1h-1zM84 516h2v1h-2zM86 515h2v1h-2zM88 514h2v1h-2zM90 513h1v1h-1zM91 512h2v1h-2zM93 511h2v1h-2zM95 510h1v1h-1zM96 509h2v1h-2zM98 508h2v1h-2zM100 507h1v1h-1zM101 506h2v1h-2zM103 505h2v1h-2zM105 504h1v1h-1zM106 503h2v1h-2zM108 502h2v1h-2zM110 501h1v1h-1zM111 500h2v1h-2zM113 499h2v1h-2zM115 498h1v1h-1zM116 497h2v1h-2zM118 496h1v1h-1zM119 495h2v1h-2zM121 494h2v1h-2zM123 493h1v1h-1zM124 492h2v1h-2zM126 491h1v1h-1zM127 490h2v1h-2zM129 489h2v1h-2zM131 488h1v1h-1zM132 487h2v1h-2zM134 486h1v1h-1zM135 485h2v1h-2zM137 484h1v1h-1zM138 483h2v1h-2zM140 482h2v1h-2zM142 481h1v1h-1zM143 480h2v1h-2zM145 479h1v1h-1zM146 478h2v1h-2zM148 477h1v1h-1zM149 476h2v1h-2zM151 475h1v1h-1zM152 474h2v1h-2zM154 473h1v1h-1zM155 472h2v1h-2zM157 471h1v1h-1zM158 470h2v1h-2zM160 469h1v1h-1zM161 468h2v1h-2zM163 467h1v1h-1zM164 466h2v1h-2zM166 465h1v1h-1zM167 464h2v1h-2zM169 463h1v1h-1zM170 462h1v1h-1zM171 461h2v1h-2zM173 460h1v1h-1zM174 459h2v1h-2zM176 458h1v1h-1zM177 457h2v1h-2zM179 456h1v1h-1zM180 455h1v1h-1zM181 454h2v1h-2zM183 453h1v1h-1zM184 452h2v1h-2zM186 451h1v1h-1zM187 450h1v1h-1zM188 449h2v1h-2zM190 448h1v1h-1zM191 447h1v1h-1zM192 446h2v1h-2zM194 445h1v1h-1zM195 444h1v1h-1zM196 443h2v1h-2zM198 442h1v1h-1zM199 441h1v1h-1zM200 440h2v1h-2zM202 439h1v1h-1zM203 438h1v1h-1zM204 437h2v1h-2zM206 436h1v1h-1zM207 435h1v1h-1zM208 434h1v1h-1zM209 433h2v1h-2zM211 432h1v1h-1zM212 431h1v1h-1zM213 430h2v1h-2zM215 429h1v1h-1zM216 428h1v1h-1zM217 427h1v1h-1zM218 426h2v1h-2zM220 425h1v1h-1zM221 424h1v1h-1zM222 423h1v1h-1zM223 422h1v1h-1zM224 421h2v1h-2zM226 420h1v1h-1zM227 419h1v1h-1zM228 418h1v1h-1zM229 417h1v1h-1zM230 416h2v1h-2zM232 415h1v1h-1zM233 414h1v1h-1zM234 413h1v1h-1zM235 412h1v1h-1zM236 411h1v1h-1zM237 410h1v1h-1zM238 409h2v1h-2zM240 408h1v1h-1zM241 407h1v1h-1zM242 406h1v1h-1zM243 405h1v1h-1zM244 404h1v1h-1zM245 403h1v1h-1zM246 402h1v1h-1zM247 401h2v1h-2zM249 400h1v1h-1zM250 399h1v1h-1zM251 398h1v1h-1zM252 397h1v1h-1zM253 396h1v1h-1zM254 395h1v1h-1zM255 394h1v1h-1zM256 393h1v1h-1zM257 392h1v1h-1zM258 391h1v1h-1zM259 390h1v1h-1zM260 389h1v1h-1zM261 388h1v1h-1zM262 387h1v1h-1zM263 386h1v1h-1zM264 385h1v1h-1zM265 384h1v1h-1zM266 383h1v1h-1zM267 382h1v1h-1zM268 381h1v1h-1zM269 380h1v1h-1zM270 379h1v1h-1zM271 378h1v1h-1zM272 377h1v1h-1zM273 376h1v1h-1zM274 375h1v1h-1zM275 374h1v1h-1zM276 373h1v1h-1zM277 372h1v1h-1zM278 371h1v1h-1zM279 370h1v1h-1zM280 369h1v1h-1zM281 368h1v1h-1zM282 367h1v1h-1zM283 366h1v1h-1zM284 365h1v1h-1zM285 364h1v1h-1zM286 363h1v1h-1zM287 362h1v1h-1zM288 361h1v1h-1zM289 359h1v2h-1zM290 358h1v1h-1zM291 357h1v1h-1zM292 356h1v1h-1zM293 355h1v1h-1zM294 354h1v1h-1zM295 352h1v2h-1zM296 351h1v1h-1zM297 350h1v1h-1zM298 349h1v1h-1zM299 348h1v1h-1zM300 346h1v2h-1zM301 345h1v1h-1zM302 344h1v1h-1zM303 343h1v1h-1zM304 341h1v2h-1zM305 340h1v1h-1zM306 339h1v1h-1zM307 338h1v1h-1zM308 336h1v2h-1zM309 335h1v1h-1zM310 334h1v1h-1zM311 332h1v2h-1zM312 331h1v1h-1zM313 330h1v1h-1zM314 329h1v1h-1zM315 327h1v2h-1zM316 326h1v1h-1zM317 324h1v2h-1zM318 323h1v1h-1zM319 322h1v1h-1zM320 320h1v2h-1zM321 319h1v1h-1zM322 318h1v1h-1zM323 316h1v2h-1zM324 315h1v1h-1zM325 314h1v1h-1zM326 312h1v2h-1zM327 311h1v1h-1zM328 309h1v2h-1zM329 308h1v1h-1zM330 307h1v1h-1zM331 305h1v2h-1zM332 304h1v1h-1zM333 302h1v2h-1zM334 301h1v1h-1zM335 300h1v1h-1zM336 298h1v2h-1zM337 297h1v1h-1zM338 295h1v2h-1zM339 294h1v1h-1zM340 292h1v2h-1zM341 291h1v1h-1zM342 290h1v1h-1zM343 288h1v2h-1zM344 287h1v1h-1zM345 286h1v1h-1zM346 284h1v2h-1zM347 283h1v1h-1zM348 281h1v2h-1zM349 280h1v1h-1zM350 279h1v1h-1zM351 278h1v1h-1zM352 276h1v2h-1zM353 275h1v1h-1zM354 274h1v1h-1zM355 273h1v1h-1zM356 271h1v2h-1zM357 270h1v1h-1zM358 269h1v1h-1zM359 268h1v1h-1zM360 267h1v1h-1zM361 266h1v1h-1zM362 265h1v1h-1zM363 264h1v1h-1zM364 263h1v1h-1zM365 262h1v1h-1zM366 261h1v1h-1zM367 260h1v1h-1zM368 259h1v1h-1zM369 258h1v1h-1zM370 257h2v1h-2zM372 256h2v1h-2zM374 255h3v1h-3zM377 254h8v1h-8zM385 255h2v1h-2zM387 256h2v1h-2zM389 257h2v1h-2zM391 258h1v1h-1zM392 259h2v1h-2zM394 260h1v1h-1zM395 261h1v1h-1zM396 262h1v1h-1zM397 263h1v1h-1zM398 264h1v1h-1zM399 265h1v1h-1zM400 266h1v1h-1zM401 267h1v1h-1zM402 268h1v1h-1zM403 269h1v1h-1zM404 270h1v1h-1zM405 271h1v1h-1zM406 272h1v2h-1zM407 274h1v1h-1zM408 275h1v1h-1zM409 276h1v2h-1zM410 278h1v1h-1zM411 279h1v1h-1zM412 280h1v2h-1zM413 282h1v1h-1zM414 283h1v2h-1zM415 285h1v1h-1zM416 286h1v2h-1zM417 288h1v1h-1zM418 289h1v2h-1zM419 291h1v1h-1zM420 292h1v2h-1zM421 294h1v1h-1zM422 295h1v2h-1zM423 297h1v1h-1zM424 298h1v2h-1zM425 300h1v1h-1zM426 301h1v2h-1zM427 303h1v2h-1zM428 305h1v1h-1zM429 306h1v2h-1zM430 308h1v1h-1zM431 309h1v2h-1zM432 311h1v1h-1zM433 312h1v2h-1zM434 314h1v1h-1zM435 315h1v2h-1zM436 317h1v1h-1zM437 318h1v2h-1zM438 320h1v2h-1zM439 322h1v1h-1zM440 323h1v2h-1zM441 325h1v1h-1zM442 326h1v2h-1zM443 328h1v1h-1zM444 329h1v2h-1zM445 331h1v1h-1zM446 332h1v2h-1zM447 334h1v1h-1zM448 335h1v2h-1zM449 337h1v1h-1zM450 338h1v1h-1zM451 339h1v2h-1zM452 341h1v1h-1zM453 342h1v2h-1zM454 344h1v1h-1zM455 345h1v2h-1zM456 347h1v1h-1zM457 348h1v1h-1zM458 349h1v2h-1zM459 351h1v1h-1zM460 352h1v2h-1zM461 354h1v1h-1zM462 355h1v1h-1zM463 356h1v2h-1zM464 358h1v1h-1zM465 359h1v1h-1zM466 360h1v2h-1zM467 362h1v1h-1zM468 363h1v1h-1zM469 364h1v2h-1zM470 366h1v1h-1zM471 367h1v1h-1zM472 368h1v2h-1zM473 370h1v1h-1zM474 371h1v1h-1zM475 372h1v2h-1zM476 374h1v1h-1zM477 375h1v1h-1zM478 376h1v1h-1zM479 377h1v2h-1zM480 379h1v1h-1zM481 380h1v1h-1zM482 381h1v1h-1zM483 382h1v2h-1zM484 384h1v1h-1zM485 385h1v1h-1zM486 386h1v1h-1zM487 387h1v2h-1zM488 389h1v1h-1zM489 390h1v1h-1zM490 391h1v1h-1zM491 392h1v1h-1zM492 393h1v2h-1zM493 395h1v1h-1zM494 396h1v1h-1zM495 397h1v1h-1zM496 398h1v1h-1zM497 399h1v2h-1zM498 401h1v1h-1zM499 402h1v1h-1zM500 403h1v1h-1zM501 404h1v1h-1zM502 405h1v1h-1zM503 406h1v1h-1zM504 407h1v2h-1zM505 409h1v1h-1zM506 410h1v1h-1zM507 411h1v1h-1zM508 412h1v1h-1zM509 413h1v1h-1zM510 414h1v1h-1zM511 415h1v1h-1zM512 416h1v2h-1zM513 418h1v1h-1zM514 419h1v1h-1zM515 420h1v1h-1zM516 421h1v1h-1zM517 422h1v1h-1zM518 423h1v1h-1zM519 424h1v1h-1zM520 425h1v1h-1zM521 426h1v1h-1zM522 427h1v1h-1zM523 428h1v1h-1zM524 429h1v1h-1zM525 430h1v2h-1zM526 432h1v1h-1zM527 433h1v1h-1zM528 434h1v1h-1zM529 435h1v1h-1zM530 436h1v1h-1zM531 437h1v1h-1zM532 438h1v1h-1zM533 439h1v1h-1zM534 440h1v1h-1zM535 441h1v1h-1zM536 442h1v1h-1zM537 443h1v1h-1zM538 444h1v1h-1zM539 445h1v1h-1zM540 446h1v1h-1zM541 447h1v1h-1zM542 448h1v1h-1zM543 449h1v1h-1zM544 450h1v1h-1zM545 451h1v1h-1zM546 452h1v1h-1zM547 453h1v1h-1zM548 454h1v1h-1zM549 455h1v1h-1zM550 456h1v1h-1zM551 457h1v1h-1zM552 458h1v1h-1zM553 459h1v1h-1zM554 460h1v1h-1zM555 461h1v1h-1zM556 462h1v1h-1zM557 463h1v1h-1zM558 464h1v1h-1zM559 465h1v1h-1zM560 466h1v1h-1zM561 467h1v1h-1zM562 468h1v1h-1zM563 469h1v1h-1zM564 470h1v1h-1zM565 471h1v1h-1zM566 472h1v1h-1zM567 473h1v1h-1zM568 474h1v1h-1zM569 475h1v1h-1zM570 476h1v1h-1zM571 477h1v1h-1zM572 478h1v1h-1zM573 479h1v1h-1zM574 480h1v1h-1zM575 481h1v1h-1zM576 482h1v1h-1zM577 483h1v1h-1zM578 484h1v1h-1zM579 485h1v1h-1zM580 486h1v1h-1zM581 487h1v1h-1zM582 488h1v1h-1zM583 489h2v1h-2zM585 490h1v1h-1zM586 491h1v1h-1zM587 492h1v1h-1zM588 493h1v1h-1zM589 494h1v1h-1zM590 495h1v1h-1zM591 496h1v1h-1zM592 497h1v1h-1zM593 498h1v1h-1zM594 499h1v1h-1zM595 500h1v1h-1zM596 501h2v1h-2zM598 502h1v1h-1zM599 503h1v1h-1zM600 504h1v1h-1zM601 505h1v1h-1zM602 506h1v1h-1zM603 507h1v1h-1zM604 508h1v1h-1zM605 509h1v1h-1zM606 510h1v1h-1zM607 511h1v1h-1zM608 512h2v1h-2zM610 513h1v1h-1zM611 514h1v1h-1zM612 515h1v1h-1zM613 516h1v1h-1zM614 517h1v1h-1zM615 518h1v1h-1zM616 519h1v1h-1zM617 520h1v1h-1zM618 521h2v1h-2zM620 522h1v1h-1zM621 523h1v1h-1zM622 524h1v1h-1zM623 525h1v1h-1zM624 526h1v1h-1zM625 527h1v1h-1zM626 528h1v1h-1zM627 529h1v1h-1zM628 530h2v1h-2zM630 531h1v1h-1zM631 532h1v1h-1zM632 533h1v1h-1zM633 534h1v1h-1zM634 535h1v1h-1zM635 536h1v1h-1zM636 537h1v1h-1zM637 538h2v1h-2zM639 539h1v1h-1zM640 540h1v1h-1zM641 541h1v1h-1zM642 542h1v1h-1zM643 543h1v1h-1zM644 544h2v1h-2z"/>
<path fill="#00ff00" d="M44 66h1v1h-1zM46 67h1v1h-1zM48 67h1v1h-1zM50 67h1v1h-1zM52 67h1v1h-1zM54 68h1v1h-1zM56 68h1v1h-1zM58 68h1v1h-1zM60 68h1v1h-1zM62 68h1v1h-1zM64 69h1v1h-1zM66 69h1v1h-1zM68 69h1v1h-1zM70 69h1v1h-1zM72 70h1v1h-1zM74 70h1v1h-1zM76 70h1v1h-1zM78 70h1v1h-1zM80 71h1v1h-1zM82 71h1v1h-1zM84 71h1v1h-1zM86 71h1v1h-1zM88 72h1v1h-1zM90 72h1v1h-1zM92 72h1v1h-1zM94 73h1v1h-1zM96 73h1v1h-1zM98 73h1v1h-1zM100 73h1v1h-1zM102 74h1v1h-1zM104 74h1v1h-1zM106 74h1v1h-1zM108 75h1v1h-1zM110 75h1v1h-1zM112 75h1v1h-1zM114 75h1v1h-1zM116 76h1v1h-1zM118 76h1v1h-1zM120 76h1v1h-1zM122 77h1v1h-1zM124 77h1v1h-1zM126 77h1v1h-1zM128 78h1v1h-1zM130 78h1v1h-1zM132 78h1v1h-1zM134 79h1v1h-1zM136 79h1v1h-1zM138 79h1v1h-1zM140 80h1v1h-1zM142 80h1v1h-1zM144 80h1v1h-1zM146 81h1v1h-1zM148 81h1v1h-1zM150 82h1v1h-1zM152 82h1v1h-1zM154 82h1v1h-1zM156 83h1v1h-1zM158 83h1v1h-1zM160 84h1v1h-1zM162 84h1v1h-1zM164 84h1v1h-1zM166 85h1v1h-1zM168 85h1v1h-1zM170 86h1v1h-1zM172 86h1v1h-1zM174 87h1v1h-1zM176 87h1v1h-1zM178 87h1v1h-1zM180 88h1v1h-1zM182 88h1v1h-1zM184 89h1v1h-1zM186 89h1v1h-1zM188 90h1v1h-1zM190 90h1v1h-1zM192 91h1v1h-1zM194 91h1v1h-1zM196 92h1v1h-1zM198 92h1v1h-1zM200 93h1v1h-1zM202 93h1v1h-1zM204 94h1v1h-1zM206 94h1v1h-1zM208 95h1v1h-1zM210 96h1v1h-1zM212 96h1v1h-1zM214 97h1v1h-1zM216 97h1v1h-1zM218 98h1v1h-1zM220 99h1v1h-1zM222 99h1v1h-1zM224 100h1v1h-1zM226 100h1v1h-1zM228 101h1v1h-1zM230 102h1v1h-1zM232 103h1v1h-1zM234 103h1v1h-1zM236 104h1v1h-1zM238 105h1v1h-1zM240 105h1v1h-1zM242 106h1v1h-1zM244 107h1v1h-1zM246 108h1v1h-1zM248 109h1v1h-1zM250 109h1v1h-1zM252 110h1v1h-1zM254 111h1v1h-1zM256 112h1v1h-1zM258 113h1v1h-1zM260 114h1v1h-1zM262 115h1v1h-1zM264 116h1v1h-1zM266 117h1v1h-1zM268 118h1v1h-1zM270 119h1v1h-1zM272 120h1v1h-1zM274 121h1v1h-1zM276 122h1v1h-1zM278 123h1v1h-1zM280 124h1v1h-1zM282 125h1v1h-1zM284 127h1v1h-1zM286 128h1v1h-1zM288 129h1v1h-1zM290 131h1v1h-1zM292 132h1v1h-1zM294 134h1v1h-1zM296 135h1v1h-1zM298 137h1v1h-1zM300 138h1v1h-1zM302 140h1v1h-1zM304 141h1v1h-1zM306 143h1v1h-1zM308 145h1v1h-1zM310 147h1v1h-1zM312 149h1v1h-1zM314 151h1v1h-1zM316 153h1v1h-1zM318 155h1v1h-1zM320 157h1v1h-1zM322 159h1v1h-1zM324 161h1v1h-1zM326 163h1v1h-1zM327 165h1v1h-1zM329 167h1v1h-1zM330 169h1v1h-1zM332 171h1v1h-1zM333 173h1v1h-1zM334 175h1v1h-1zM336 177h1v1h-1zM337 179h1v1h-1zM338 181h1v1h-1zM340 183h1v1h-1zM341 185h1v1h-1zM342 187h1v1h-1zM343 189h1v1h-1zM344 191h1v1h-1zM345 193h1v1h-1zM346 195h1v1h-1zM347 197h1v1h-1zM348 199h1v1h-1zM349 201h1v1h-1zM350 203h1v1h-1zM351 205h1v1h-1zM352 207h1v1h-1zM353 209h1v1h-1zM354 211h1v1h-1zM355 213h1v1h-1zM356 215h1v1h-1zM357 217h1v1h-1zM357 219h1v1h-1zM358 221h1v1h-1zM359 223h1v1h-1zM360 225h1v1h-1zM361 227h1v1h-1zM362 229h1v1h-1zM362 231h1v1h-1zM363 233h1v1h-1zM364 235h1v1h-1zM365 237h1v1h-1zM365 239h1v1h-1zM366 241h1v1h-1zM367 243h1v1h-1zM368 245h1v1h-1zM368 247h1v1h-1zM369 249h1v1h-1zM370 251h1v1h-1zM370 253h1v1h-1zM371 255h1v1h-1zM372 257h1v1h-1zM373 259h1v1h-1zM373 261h1v1h-1zM374 263h1v1h-1zM375 265h1v1h-1zM375 267h1v1h-1zM376 269h1v1h-1zM377 271h1v1h-1zM377 273h1v1h-1zM378 275h1v1h-1zM379 277h1v1h-1zM379 279h1v1h-1zM380 281h1v1h-1zM381 283h1v1h-1zM381 285h1v1h-1zM382 287h1v1h-1zM383 289h1v1h-1zM383 291h1v1h-1zM384 293h1v1h-1zM385 295h1v1h-1zM385 297h1v1h-1zM386 299h1v1h-1zM387 301h1v1h-1zM387 303h1v1h-1zM388 305h1v1h-1zM389 307h1v1h-1zM389 309h1v1h-1zM390 311h1v1h-1zM391 313h1v1h-1zM391 315h1v1h-1zM392 317h1v1h-1zM393 319h1v1h-1zM393 321h1v1h-1zM394 323h1v1h-1zM395 325h1v1h-1zM396 327h1v1h-1zM396 329h1v1h-1zM397 331h1v1h-1zM398 333h1v1h-1zM399 335h1v1h-1zM399 337h1v1h-1zM400 339h1v1h-1zM401 341h1v1h-1zM402 343h1v1h-1zM402 345h1v1h-1zM403 347h1v1h-1zM404 349h1v1h-1zM405 351h1v1h-1zM406 353h1v1h-1zM407 355h1v1h-1zM407 357h1v1h-1zM408 359h1v1h-1zM409 361h1v1h-1zM410 363h1v1h-1zM411 365h1v1h-1zM412 367h1v1h-1zM413 369h1v1h-1zM414 371h1v1h-1zM415 373h1v1h-1zM416 375h1v1h-1zM417 377h1v1h-1zM418 379h1v1h-1zM419 381h1v1h-1zM420 383h1v1h-1zM421 385h1v1h-1zM422 387h1v1h-1zM423 389h1v1h-1zM425 391h1v1h-1zM426 393h1v1h-1zM427 395h1v1h-1zM428 397h1v1h-1zM430 399h1v1h-1zM431 401h1v1h-1zM432 403h1v1h-1zM434 405h1v1h-1zM435 407h1v1h-1zM437 409h1v1h-1zM438 411h1v1h-1zM440 413h1v1h-1zM441 415h1v1h-1zM443 417h1v1h-1zM445 419h1v1h-1zM447 421h1v1h-1zM448 423h1v1h-1zM450 425h1v1h-1zM452 427h1v1h-1zM454 429h1v1h-1zM456 431h1v1h-1zM458 433h1v1h-1zM460 435h1v1h-1zM462 437h1v1h-1zM464 439h1v1h-1zM466 441h1v1h-1zM468 442h1v1h-1zM470 444h1v1h-1zM472 445h1v1h-1zM474 447h1v1h-1zM476 448h1v1h-1zM478 450h1v1h-1zM480 451h1v1h-1zM482 453h1v1h-1zM484 454h1v1h-1zM486 455h1v1h-1zM488 457h1v1h-1zM490 458h1v1h-1zM492 459h1v1h-1zM494 460h1v1h-1zM496 462h1v1h-1zM498 463h1v1h-1zM500 464h1v1h-1zM502 465h1v1h-1zM504 466h1v1h-1zM506 467h1v1h-1zM508 468h1v1h-1zM510 470h1v1h-1zM512 471h1v1h-1zM514 472h1v1h-1zM516 473h1v1h-1zM518 474h1v1h-1zM520 475h1v1h-1zM522 476h1v1h-1zM524 477h1v1h-1zM526 478h1v1h-1zM528 479h1v1h-1zM530 480h1v1h-1zM532 481h1v1h-1zM534 481h1v1h-1zM536 482h1v1h-1zM538 483h1v1h-1zM540 484h1v1h-1zM542 485h1v1h-1zM544 486h1v1h-1zM546 487h1v1h-1zM548 488h1v1h-1zM550 489h1v1h-1zM552 489h1v1h-1zM554 490h1v1h-1zM556 491h1v1h-1zM558 492h1v1h-1zM560 493h1v1h-1zM562 494h1v1h-1zM564 494h1v1h-1zM566 495h1v1h-1zM568 496h1v1h-1zM570 497h1v1h-1zM572 498h1v1h-1zM574 498h1v1h-1zM576 499h1v1h-1zM578 500h1v1h-1zM580 501h1v1h-1zM582 502h1v1h-1zM584 502h1v1h-1zM586 503h1v1h-1zM588 504h1v1h-1zM590 505h1v1h-1zM592 505h1v1h-1zM594 506h1v1h-1zM596 507h1v1h-1zM598 508h1v1h-1zM600 508h1v1h-1zM602 509h1v1h-1zM604 510h1v1h-1zM606 510h1v1h-1zM608 511h1v1h-1zM610 512h1v1h-1zM612 513h1v1h-1zM614 513h1v1h-1zM616 514h1v1h-1zM618 515h1v1h-1zM620 515h1v1h-1zM622 516h1v1h-1zM624 517h1v1h-1zM626 517h1v1h-1zM628 518h1v1h-1zM630 519h1v1h-1zM632 520h1v1h-1zM634 520h1v1h-1zM636 521h1v1h-1zM638 522h1v1h-1zM640 522h1v1h-1zM642 523h1v1h-1zM644 524h1v1h-1z"/>
<path fill="#0000ff" d="M44 539h1v1h-1zM45 538h2v1h-2zM47 537h1v1h-1zM48 536h2v1h-2zM50 535h2v1h-2zM52 534h2v1h-2zM54 533h1v1h-1zM55 532h2v1h-2zM57 531h2v1h-2zM59 530h2v1h-2zM61 529h1v1h-1zM62 528h2v1h-2zM64 527h2v1h-2zM66 526h2v1h-2zM68 525h1v1h-1zM69 524h2v1h-2zM71 523h2v1h-2zM73 522h1v1h-1zM74 521h2v1h-2zM76 520h2v1h-2zM78 519h2v1h-2zM80 518h1v1h-1zM81 517h2v1h-2zM83 516h2v1h-2zM85 515h1v1h-1zM86 514h2v1h-2zM88 513h2v1h-2zM90 512h1v1h-1zM91 511h2v1h-2zM93 510h2v1h-2zM95 509h1v1h-1zM96 508h2v1h-2zM98 507h2v1h-2zM100 506h1v1h-1zM101 505h2v1h-2zM103 504h2v1h-2zM105 503h1v1h-1zM106 502h2v1h-2zM108 501h1v1h-1zM109 500h2v1h-2zM111 499h2v1h-2zM113 498h1v1h-1zM114 497h2v1h-2zM116 496h1v1h-1zM117 495h2v1h-2zM119 494h2v1h-2zM121 493h1v1h-1zM122 492h2v1h-2zM124 491h1v1h-1zM125 490h2v1h-2zM127 489h1v1h-1zM128 488h2v1h-2zM130 487h2v1h-2zM132 486h1v1h-1zM133 485h2v1h-2zM135 484h1v1h-1zM136 483h2v1h-2zM138 482h1v1h-1zM139 481h2v1h-2zM141 480h1v1h-1zM142 479h2v1h-2zM144 478h1v1h-1zM145 477h2v1h-2zM147 476h1v1h-1zM148 475h2v1h-2zM150 474h1v1h-1zM151 473h2v1h-2zM153 472h1v1h-1zM154 471h2v1h-2zM156 470h1v1h-1zM157 469h1v1h-1zM158 468h2v1h-2zM160 467h1v1h-1zM161 466h2v1h-2zM163 465h1v1h-1zM164 464h2v1h-2zM166 463h1v1h-1zM167 462h1v1h-1zM168 461h2v1h-2zM170 460h1v1h-1zM171 459h2v1h-2zM173 458h1v1h-1zM174 457h1v1h-1zM175 456h2v1h-2zM177 455h1v1h-1zM178 454h1v1h-1zM179 453h2v1h-2zM181 452h1v1h-1zM182 451h1v1h-1zM183 450h2v1h-2zM185 449h1v1h-1zM186 448h1v1h-1zM187 447h2v1h-2zM189 446h1v1h-1zM190 445h1v1h-1zM191 444h2v1h-2zM193 443h1v1h-1zM194 442h1v1h-1zM195 441h2v1h-2zM197 440h1v1h-1zM198 439h1v1h-1zM199 438h1v1h-1zM200 437h2v1h-2zM202 436h1v1h-1zM203 435h1v1h-1zM204 434h1v1h-1zM205 433h2v1h-2zM207 432h1v1h-1zM208 431h1v1h-1zM209 430h1v1h-1zM210 429h1v1h-1zM211 428h2v1h-2zM213 427h1v1h-1zM214 426h1v1h-1zM215 425h1v1h-1zM216 424h1v1h-1zM217 423h1v1h-1zM218 422h2v1h-2zM220 421h1v1h-1zM221 420h1v1h-1zM222 419h1v1h-1zM223 418h1v1h-1zM224 417h1v1h-1zM225 416h1v1h-1zM226 415h2v1h-2zM228 414h1v1h-1zM229 413h1v1h-1zM230 412h1v1h-1zM231 411h1v1h-1zM232 410h1v1h-1zM233 409h1v1h-1zM234 408h1v1h-1zM235 407h1v1h-1zM236 406h1v1h-1zM237 405h1v1h-1zM238 404h1v1h-1zM239 403h1v1h-1zM240 402h2v1h-2zM242 401h1v1h-1zM243 400h1v1h-1zM244 399h1v1h-1zM245 398h1v1h-1zM246 397h1v1h-1zM247 396h1v1h-1zM248 395h1v1h-1zM249 394h1v1h-1zM250 393h1v1h-1zM251 392h1v1h-1zM252 391h1v1h-1zM253 390h1v1h-1zM254 389h1v1h-1zM255 388h1v1h-1zM256 387h1v1h-1zM257 386h1v1h-1zM258 385h1v1h-1zM259 384h1v1h-1zM260 383h1v1h-1zM261 382h1v1h-1zM262 381h1v1h-1zM263 380h1v1h-1zM264 378h1v2h-1zM265 377h1v1h-1zM266 376h1v1h-1zM267 375h1v1h-1zM268 374h1v1h-1zM269 373h1v1h-1zM270 372h1v1h-1zM271 370h1v2h-1zM272 369h1v1h-1zM273 368h1v1h-1zM274 367h1v1h-1zM275 366h1v1h-1zM276 364h1v2h-1zM277 363h1v1h-1zM278 362h1v1h-1zM279 361h1v1h-1zM280 359h1v2h-1zM281 358h1v1h-1zM282 357h1v1h-1zM283 355h1v2h-1zM284 354h1v1h-1zM285 353h1v1h-1zM286 351h1v2h-1zM287 350h1v1h-1zM288 349h1v1h-1zM289 347h1v2h-1zM290 346h1v1h-1zM291 344h1v2h-1zM292 343h1v1h-1zM293 342h1v1h-1zM294 340h1v2h-1zM295 339h1v1h-1zM296 337h1v2h-1zM297 336h1v1h-1zM298 334h1v2h-1zM299 333h1v1h-1zM300 331h1v2h-1zM301 329h1v2h-1zM302 328h1v1h-1zM303 326h1v2h-1zM304 325h1v1h-1zM305 323h1v2h-1zM306 321h1v2h-1zM307 320h1v1h-1zM308 318h1v2h-1zM309 316h1v2h-1zM310 314h1v2h-1zM311 313h1v1h-1zM312 311h1v2h-1zM313 309h1v2h-1zM314 307h1v2h-1zM315 305h1v2h-1zM316 304h1v1h-1zM317 302h1v2h-1zM318 300h1v2h-1zM319 298h1v2h-1zM320 296h1v2h-1zM321 294h1v2h-1zM322 292h1v2h-1zM323 289h1v3h-1zM324 287h1v2h-1zM325 285h1v2h-1zM326 283h1v2h-1zM327 281h1v2h-1zM328 278h1v3h-1zM329 276h1v2h-1zM330 274h1v2h-1zM331 271h1v3h-1zM332 269h1v2h-1zM333 266h1v3h-1zM334 264h1v2h-1zM335 261h1v3h-1zM336 259h1v2h-1zM337 256h1v3h-1zM338 253h1v3h-1zM339 251h1v2h-1zM340 248h1v3h-1zM341 245h1v3h-1zM342 242h1v3h-1zM343 239h1v3h-1zM344 236h1v3h-1zM345 233h1v3h-1zM346 229h1v4h-1zM347 226h1v3h-1zM348 223h1v3h-1zM349 219h1v4h-1zM350 216h1v3h-1zM351 212h1v4h-1zM352 209h1v3h-1zM353 205h1v4h-1zM354 201h1v4h-1zM355 197h1v4h-1zM356 193h1v4h-1zM357 189h1v4h-1zM358 184h1v5h-1zM359 180h1v4h-1zM360 176h1v4h-1zM361 171h1v5h-1zM362 166h1v5h-1zM363 162h1v4h-1zM364 157h1v5h-1zM365 152h1v5h-1zM366 147h1v5h-1zM367 142h1v5h-1zM368 136h1v6h-1zM369 131h1v5h-1zM370 126h1v5h-1zM371 121h1v5h-1zM372 116h1v5h-1zM373 111h1v5h-1zM374 107h1v4h-1zM375 102h1v5h-1zM376 99h1v3h-1zM377 96h1v3h-1zM378 93h1v3h-1zM379 91h1v2h-1zM380 90h1v1h-1zM381 89h2v1h-2zM383 90h1v2h-1zM384 92h1v2h-1zM385 94h1v3h-1zM386 97h1v4h-1zM387 101h1v4h-1zM388 105h1v4h-1zM389 109h1v5h-1zM390 114h1v5h-1zM391 119h1v5h-1zM392 124h1v6h-1zM393 130h1v5h-1zM394 135h1v5h-1zM395 140h1v5h-1zM396 145h1v6h-1zM397 151h1v5h-1zM398 156h1v5h-1zM399 161h1v5h-1zM400 166h1v5h-1zM401 171h1v5h-1zM402 176h1v4h-1zM403 180h1v5h-1zM404 185h1v4h-1zM405 189h1v5h-1zM406 194h1v4h-1zM407 198h1v4h-1zM408 202h1v4h-1zM409 206h1v4h-1zM410 210h1v4h-1zM411 214h1v4h-1zM412 218h1v3h-1zM413 221h1v4h-1zM414 225h1v3h-1zM415 228h1v4h-1zM416 232h1v3h-1zM417 235h1v3h-1zM418 238h1v4h-1zM419 242h1v3h-1zM420 245h1v3h-1zM421 248h1v3h-1zM422 251h1v3h-1zM423 254h1v3h-1zM424 257h1v3h-1zM425 260h1v3h-1zM426 263h1v2h-1zM427 265h1v3h-1zM428 268h1v3h-1zM429 271h1v2h-1zM430 273h1v3h-1zM431 276h1v3h-1zM432 279h1v2h-1zM433 281h1v2h-1zM434 283h1v3h-1zM435 286h1v2h-1zM436 288h1v3h-1zM437 291h1v2h-1zM438 293h1v2h-1zM439 295h1v2h-1zM440 297h1v3h-1zM441 300h1v2h-1zM442 302h1v2h-1zM443 304h1v2h-1zM444 306h1v2h-1zM445 308h1v2h-1zM446 310h1v2h-1zM447 312h1v2h-1zM448 314h1v2h-1zM449 316h1v2h-1zM450 318h1v2h-1zM451 320h1v2h-1zM452 322h1v2h-1zM453 324h1v2h-1zM454 326h1v2h-1zM455 328h1v2h-1zM456 330h1v2h-1zM457 332h1v1h-1zM458 333h1v2h-1zM459 335h1v2h-1zM460 337h1v2h-1zM461 339h1v1h-1zM462 340h1v2h-1zM463 342h1v2h-1zM464 344h1v1h-1zM465 345h1v2h-1zM466 347h1v2h-1zM467 349h1v1h-1zM468 350h1v2h-1zM469 352h1v2h-1zM470 354h1v1h-1zM471 355h1v2h-1zM472 357h1v1h-1zM473 358h1v2h-1zM474 360h1v1h-1zM475 361h1v2h-1zM476 363h1v1h-1zM477 364h1v2h-1zM478 366h1v1h-1zM479 367h1v2h-1zM480 369h1v1h-1zM481 370h1v2h-1zM482 372h1v1h-1zM483 373h1v1h-1zM484 374h1v2h-1zM485 376h1v1h-1zM486 377h1v2h-1zM487 379h1v1h-1zM488 380h1v1h-1zM489 381h1v2h-1zM490 383h1v1h-1zM491 384h1v2h-1zM492 386h1v1h-1zM493 387h1v1h-1zM494 388h1v1h-1zM495 389h1v2h-1zM496 391h1v1h-1zM497 392h1v1h-1zM498 393h1v2h-1zM499 395h1v1h-1zM500 396h1v1h-1zM501 397h1v2h-1zM502 399h1v1h-1zM503 400h1v1h-1zM504 401h1v1h-1zM505 402h1v2h-1zM506 404h1v1h-1zM507 405h1v1h-1zM508 406h1v1h-1zM509 407h1v1h-1zM510 408h1v2h-1zM511 410h1v1h-1zM512 411h1v1h-1zM513 412h1v1h-1zM514 413h1v1h-1zM515 414h1v2h-1zM516 416h1v1h-1zM517 417h1v1h-1zM518 418h1v1h-1zM519 419h1v1h-1zM520 420h1v1h-1zM521 421h1v2h-1zM522 423h1v1h-1zM523 424h1v1h-1zM524 425h1v1h-1zM525 426h1v1h-1zM526 427h1v1h-1zM527 428h1v1h-1zM528 429h1v1h-1zM529 430h1v1h-1zM530 431h1v2h-1zM531 433h1v1h-1zM532 434h1v1h-1zM533 435h1v1h-1zM534 436h1v1h-1zM535 437h1v1h-1zM536 438h1v1h-1zM537 439h1v1h-1zM538 440h1v1h-1zM539 441h1v1h-1zM540 442h1v1h-1zM541 443h1v1h-1zM542 444h1v2h-1zM543 446h1v1h-1zM544 447h1v1h-1zM545 448h1v1h-1zM546 449h1v1h-1zM547 450h1v1h-1zM548 451h1v1h-1zM549 452h1v1h-1zM550 453h1v1h-1zM551 454h1v1h-1zM552 455h1v1h-1zM553 456h1v1h-1zM554 457h1v1h-1zM555 458h1v1h-1zM556 459h1v1h-1zM557 460h1v1h-1zM558 461h1v1h-1zM559 462h1v1h-1zM560 463h1v1h-1zM561 464h1v1h-1zM562 465h1v1h-1zM563 466h1v1h-1zM564 467h1v1h-1zM565 468h1v1h-1zM566 469h1v1h-1zM567 470h1v1h-1zM568 471h1v1h-1zM569 472h1v1h-1zM570 473h1v1h-1zM571 474h1v1h-1zM572 475h1v1h-1zM573 476h1v1h-1zM574 477h1v1h-1zM575 478h1v1h-1zM576 479h1v1h-1zM577 480h1v1h-1zM578 481h1v1h-1zM579 482h1v1h-1zM580 483h1v1h-1zM581 484h1v1h-1zM582 485h1v1h-1zM583 486h1v1h-1zM584 487h1v1h-1zM585 488h1v1h-1zM586 489h1v1h-1zM587 490h1v1h-1zM588 491h1v1h-1zM589 492h1v1h-1zM590 493h1v1h-1zM591 494h1v1h-1zM592 495h1v1h-1zM593 496h1v1h-1zM594 497h1v1h-1zM595 498h1v1h-1zM596 499h1v1h-1zM597 500h1v1h-1zM598 501h1v1h-1zM599 502h1v1h-1zM600 503h2v1h-2zM602 504h1v1h-1zM603 505h1v1h-1zM604 506h1v1h-1zM605 507h1v1h-1zM606 508h1v1h-1zM607 509h1v1h-1zM608 510h1v1h-1zM609 511h1v1h-1zM610 512h1v1h-1zM611 513h1v1h-1zM612 514h1v1h-1zM613 515h1v1h-1zM614 516h2v1h-2zM616 517h1v1h-1zM617 518h1v1h-1zM618 519h1v1h-1zM619 520h1v1h-1zM620 521h1v1h-1zM621 522h1v1h-1zM622 523h1v1h-1zM623 524h1v1h-1zM624 525h1v1h-1zM625 526h1v1h-1zM626 527h2v1h-2zM628 528h1v1h-1zM629 529h1v1h-1zM630 530h1v1h-1zM631 531h1v1h-1zM632 532h1v1h-1zM633 533h1v1h-1zM634 534h1v1h-1zM635 535h1v1h-1zM636 536h2v1h-2zM638 537h1v1h-1zM639 538h1v1h-1zM640 539h1v1h-1zM641 540h1v1h-1zM642 541h1v1h-1zM643 542h1v1h-1zM644 543h2v1h-2z"/>
<path fill="#0000ff" d="M44 57h1v1h-1zM46 57h1v1h-1zM48 57h1v1h-1zM50 58h1v1h-1zM52 58h1v1h-1zM54 58h1v1h-1zM56 58h1v1h-1zM58 58h1v1h-1zM60 58h1v1h-1zM62 58h1v1h-1zM64 59h1v1h-1zM66 59h1v1h-1zM68 59h1v1h-1zM70 59h1v1h-1zM72 59h1v1h-1zM74 59h1v1h-1zM76 59h1v1h-1zM78 60h1v1h-1zM80 60h1v1h-1zM82 60h1v1h-1zM84 60h1v1h-1zM86 60h1v1h-1zM88 60h1v1h-1zM90 61h1v1h-1zM92 61h1v1h-1zM94 61h1v1h-1zM96 61h1v1h-1zM98 61h1v1h-1zM100 61h1v1h-1zM102 62h1v1h-1zM104 62h1v1h-1zM106 62h1v1h-1zM108 62h1v1h-1zM110 62h1v1h-1zM112 62h1v1h-1zM114 63h1v1h-1zM116 63h1v1h-1zM118 63h1v1h-1zM120 63h1v1h-1zM122 63h1v1h-1zM124 64h1v1h-1zM126 64h1v1h-1zM128 64h1v1h-1zM130 64h1v1h-1zM132 64h1v1h-1zM134 65h1v1h-1zM136 65h1v1h-1zM138 65h1v1h-1zM140 65h1v1h-1zM142 65h1v1h-1zM144 66h1v1h-1zM146 66h1v1h-1zM148 66h1v1h-1zM150 66h1v1h-1zM152 66h1v1h-1zM154 67h1v1h-1zM156 67h1v1h-1zM158 67h1v1h-1zM160 67h1v1h-1zM162 68h1v1h-1zM164 68h1v1h-1zM166 68h1v1h-1zM168 68h1v1h-1zM170 69h1v1h-1zM172 69h1v1h-1zM174 69h1v1h-1zM176 69h1v1h-1zM178 70h1v1h-1zM180 70h1v1h-1zM182 70h1v1h-1zM184 70h1v1h-1zM186 71h1v1h-1zM188 71h1v1h-1zM190 71h1v1h-1zM192 71h1v1h-1zM194 72h1v1h-1zM196 72h1v1h-1zM198 72h1v1h-1zM200 72h1v1h-1zM202 73h1v1h-1zM204 73h1v1h-1zM206 73h1v1h-1zM208 74h1v1h-1zM210 74h1v1h-1zM212 74h1v1h-1zM214 75h1v1h-1zM216 75h1v1h-1zM218 75h1v1h-1zM220 75h1v1h-1zM222 76h1v1h-1zM224 76h1v1h-1zM226 76h1v1h-1zM228 77h1v1h-1zM230 77h1v1h-1zM232 77h1v1h-1zM234 78h1v1h-1zM236 78h1v1h-1zM238 79h1v1h-1zM240 79h1v1h-1zM242 79h1v1h-1zM244 80h1v1h-1zM246 80h1v1h-1zM248 80h1v1h-1zM250 81h1v1h-1zM252 81h1v1h-1zM254 82h1v1h-1zM256 82h1v1h-1zM258 83h1v1h-1zM260 83h1v1h-1zM262 83h1v1h-1zM264 84h1v1h-1zM266 84h1v1h-1zM268 85h1v1h-1zM270 85h1v1h-1zM272 86h1v1h-1zM274 86h1v1h-1zM276 87h1v1h-1zM278 87h1v1h-1zM280 88h1v1h-1zM282 88h1v1h-1zM284 89h1v1h-1zM286 90h1v1h-1zM288 90h1v1h-1zM290 91h1v1h-1zM292 91h1v1h-1zM294 92h1v1h-1zM296 93h1v1h-1zM298 93h1v1h-1zM300 94h1v1h-1zM302 95h1v1h-1zM304 96h1v1h-1zM306 96h1v1h-1zM308 97h1v1h-1zM310 98h1v1h-1zM312 99h1v1h-1zM314 100h1v1h-1zM316 101h1v1h-1zM318 102h1v1h-1zM320 103h1v1h-1zM322 104h1v1h-1zM324 105h1v1h-1zM326 107h1v1h-1zM328 108h1v1h-1zM330 109h1v1h-1zM332 111h1v1h-1zM334 112h1v1h-1zM336 114h1v1h-1zM338 116h1v1h-1zM340 118h1v1h-1zM342 120h1v1h-1zM344 122h1v1h-1zM346 124h1v1h-1zM348 126h1v1h-1zM349 128h1v1h-1zM351 130h1v1h-1zM352 132h1v1h-1zM353 134h1v1h-1zM354 136h1v1h-1zM355 138h1v1h-1zM356 140h1v1h-1zM357 142h1v1h-1zM358 144h1v1h-1zM359 146h1v1h-1zM359 148h1v1h-1zM360 150h1v1h-1zM361 152h1v1h-1zM362 154h1v1h-1zM362 156h1v1h-1zM363 158h1v1h-1zM363 160h1v1h-1zM364 162h1v1h-1zM364 164h1v1h-1zM365 166h1v1h-1zM366 168h1v1h-1zM366 170h1v1h-1zM366 172h1v1h-1zM367 174h1v1h-1zM367 176h1v1h-1zM368 178h1v1h-1zM368 180h1v1h-1zM369 182h1v1h-1zM369 184h1v1h-1zM369 186h1v1h-1zM370 188h1v1h-1zM370 190h1v1h-1zM370 192h1v1h-1zM371 194h1v1h-1zM371 196h1v1h-1zM371 198h1v1h-1zM372 200h1v1h-1zM372 202h1v1h-1zM372 204h1v1h-1zM373 206h1v1h-1zM373 208h1v1h-1zM373 210h1v1h-1zM373 212h1v1h-1zM374 214h1v1h-1zM374 216h1v1h-1zM374 218h1v1h-1zM374 220h1v1h-1zM375 222h1v1h-1zM375 224h1v1h-1zM375 226h1v1h-1zM375 228h1v1h-1zM376 230h1v1h-1zM376 232h1v1h-1zM376 234h1v1h-1zM376 236h1v1h-1zM376 238h1v1h-1zM377 240h1v1h-1zM377 242h1v1h-1zM377 244h1v1h-1zM377 246h1v1h-1zM378 248h1v1h-1zM378 250h1v1h-1zM378 252h1v1h-1zM378 254h1v1h-1zM378 256h1v1h-1zM379 258h1v1h-1zM379 260h1v1h-1zM379 262h1v1h-1zM379 264h1v1h-1zM379 266h1v1h-1zM380 268h1v1h-1zM380 270h1v1h-1zM380 272h1v1h-1zM380 274h1v1h-1zM380 276h1v1h-1zM380 278h1v1h-1zM381 280h1v1h-1zM381 282h1v1h-1zM381 284h1v1h-1zM381 286h1v1h-1zM381 288h1v1h-1zM382 290h1v1h-1zM382 292h1v1h-1zM382 294h1v1h-1zM382 296h1v1h-1zM382 298h1v1h-1zM383 300h1v1h-1zM383 302h1v1h-1zM383 304h1v1h-1zM383 306h1v1h-1zM383 308h1v1h-1zM384 310h1v1h-1zM384 312h1v1h-1zM384 314h1v1h-1zM384 316h1v1h-1zM384 318h1v1h-1zM385 320h1v1h-1zM385 322h1v1h-1zM385 324h1v1h-1zM385 326h1v1h-1zM385 328h1v1h-1zM386 330h1v1h-1zM386 332h1v1h-1zM386 334h1v1h-1zM386 336h1v1h-1zM386 338h1v1h-1zM387 340h1v1h-1zM387 342h1v1h-1zM387 344h1v1h-1zM387 346h1v1h-1zM388 348h1v1h-1zM388 350h1v1h-1zM388 352h1v1h-1zM388 354h1v1h-1zM389 356h1v1h-1zM389 358h1v1h-1zM389 360h1v1h-1zM389 362h1v1h-1zM390 364h1v1h-1zM390 366h1v1h-1zM390 368h1v1h-1zM391 370h1v1h-1zM391 372h1v1h-1zM391 374h1v1h-1zM392 376h1v1h-1zM392 378h1v1h-1zM392 380h1v1h-1zM393 382h1v1h-1zM393 384h1v1h-1zM393 386h1v1h-1zM394 388h1v1h-1zM394 390h1v1h-1zM394 392h1v1h-1zM395 394h1v1h-1zM395 396h1v1h-1zM396 398h1v1h-1zM396 400h1v1h-1zM397 402h1v1h-1zM397 404h1v1h-1zM398 406h1v1h-1zM398 408h1v1h-1zM399 410h1v1h-1zM399 412h1v1h-1zM400 414h1v1h-1zM400 416h1v1h-1zM401 418h1v1h-1zM402 420h1v1h-1zM403 422h1v1h-1zM403 424h1v1h-1zM404 426h1v1h-1zM405 428h1v1h-1zM406 430h1v1h-1zM407 432h1v1h-1zM408 434h1v1h-1zM409 436h1v1h-1zM410 438h1v1h-1zM411 440h1v1h-1zM412 442h1v1h-1zM413 444h1v1h-1zM415 446h1v1h-1zM416 448h1v1h-1zM418 450h1v1h-1zM420 452h1v1h-1zM421 454h1v1h-1zM423 456h1v1h-1zM425 458h1v1h-1zM427 460h1v1h-1zM429 462h1v1h-1zM431 464h1v1h-1zM433 465h1v1h-1zM435 467h1v1h-1zM437 468h1v1h-1zM439 469h1v1h-1zM441 470h1v1h-1zM443 472h1v1h-1zM445 473h1v1h-1zM447 474h1v1h-1zM449 475h1v1h-1zM451 476h1v1h-1zM453 477h1v1h-1zM455 478h1v1h-1zM457 479h1v1h-1zM459 480h1v1h-1zM461 481h1v1h-1zM463 481h1v1h-1zM465 482h1v1h-1zM467 483h1v1h-1zM469 484h1v1h-1zM471 485h1v1h-1zM473 486h1v1h-1zM475 486h1v1h-1zM477 487h1v1h-1zM479 488h1v1h-1zM481 489h1v1h-1zM483 489h1v1h-1zM485 490h1v1h-1zM487 491h1v1h-1zM489 491h1v1h-1zM491 492h1v1h-1zM493 493h1v1h-1zM495 493h1v1h-1zM497 494h1v1h-1zM499 495h1v1h-1zM501 495h1v1h-1zM503 496h1v1h-1zM505 497h1v1h-1zM507 497h1v1h-1zM509 498h1v1h-1zM511 499h1v1h-1zM513 499h1v1h-1zM515 500h1v1h-1zM517 501h1v1h-1zM519 501h1v1h-1zM521 502h1v1h-1zM523 502h1v1h-1zM525 503h1v1h-1zM527 504h1v1h-1zM529 504h1v1h-1zM531 505h1v1h-1zM533 505h1v1h-1zM535 506h1v1h-1zM537 507h1v1h-1zM539 507h1v1h-1zM541 508h1v1h-1zM543 508h1v1h-1zM545 509h1v1h-1zM547 509h1v1h-1zM549 510h1v1h-1zM551 511h1v1h-1zM553 511h1v1h-1zM555 512h1v1h-1zM557 512h1v1h-1zM559 513h1v1h-1zM561 514h1v1h-1zM563 514h1v1h-1zM565 515h1v1h-1zM567 515h1v1h-1zM569 516h1v1h-1zM571 516h1v1h-1zM573 517h1v1h-1zM575 517h1v1h-1zM577 518h1v1h-1zM579 519h1v1h-1zM581 519h1v1h-1zM583 520h1v1h-1zM585 520h1v1h-1zM587 521h1v1h-1zM589 521h1v1h-1zM591 522h1v1h-1zM593 523h1v1h-1zM595 523h1v1h-1zM597 524h1v1h-1zM599 524h1v1h-1zM601 525h1v1h-1zM603 525h1v1h-1zM605 526h1v1h-1zM607 526h1v1h-1zM609 527h1v1h-1zM611 527h1v1h-1zM613 528h1v1h-1zM615 529h1v1h-1zM617 529h1v1h-1zM619 530h1v1h-1zM621 530h1v1h-1zM623 531h1v1h-1zM625 531h1v1h-1zM627 532h1v1h-1zM629 532h1v1h-1zM631 533h1v1h-1zM633 533h1v1h-1zM635 534h1v1h-1zM637 535h1v1h-1zM639 535h1v1h-1zM641 536h1v1h-1zM643 536h1v1h-1zM645 537h1v1h-1z"/>
<path fill="#ff0000" d="M44 539h1v1h-1zM45 538h2v1h-2zM47 537h1v1h-1zM48 536h2v1h-2zM50 535h2v1h-2zM52 534h2v1h-2zM54 533h1v1h-1zM55 532h2v1h-2zM57 531h2v1h-2zM59 530h2v1h-2zM61 529h1v1h-1zM62 528h2v1h-2zM64 527h2v1h-2zM66 526h2v1h-2zM68 525h1v1h-1zM69 524h2v1h-2zM71 523h2v1h-2zM73 522h1v1h-1zM74 521h2v1h-2zM76 520h2v1h-2zM78 519h1v1h-1zM79 518h2v1h-2zM81 517h2v1h-2zM83 516h2v1h-2zM85 515h1v1h-1zM86 514h2v1h-2zM88 513h2v1h-2zM90 512h1v1h-1zM91 511h2v1h-2zM93 510h2v1h-2zM95 509h1v1h-1zM96 508h2v1h-2zM98 507h2v1h-2zM100 506h1v1h-1zM101 505h2v1h-2zM103 504h1v1h-1zM104 503h2v1h-2zM106 502h2v1h-2zM108 501h1v1h-1zM109 500h2v1h-2zM111 499h2v1h-2zM113 498h1v1h-1zM114 497h2v1h-2zM116 496h1v1h-1zM117 495h2v1h-2zM119 494h1v1h-1zM120 493h2v1h-2zM122 492h2v1h-2zM124 491h1v1h-1zM125 490h2v1h-2zM127 489h1v1h-1zM128 488h2v1h-2zM130 487h1v1h-1zM131 486h2v1h-2zM133 485h1v1h-1zM134 484h2v1h-2zM136 483h2v1h-2zM138 482h1v1h-1zM139 481h2v1h-2zM141 480h1v1h-1zM142 479h2v1h-2zM144 478h1v1h-1zM145 477h2v1h-2zM147 476h1v1h-1zM148 475h2v1h-2zM150 474h1v1h-1zM151 473h1v1h-1zM152 472h2v1h-2zM154 471h1v1h-1zM155 470h2v1h-2zM157 469h1v1h-1zM158 468h2v1h-2zM160 467h1v1h-1zM161 466h2v1h-2zM163 465h1v1h-1zM164 464h1v1h-1zM165 463h2v1h-2zM167 462h1v1h-1zM168 461h2v1h-2zM170 460h1v1h-1zM171 459h1v1h-1zM172 458h2v1h-2zM174 457h1v1h-1zM175 456h2v1h-2zM177 455h1v1h-1zM178 454h1v1h-1zM179 453h2v1h-2zM181 452h1v1h-1zM182 451h1v1h-1zM183 450h2v1h-2zM185 449h1v1h-1zM186 448h1v1h-1zM187 447h2v1h-2zM189 446h1v1h-1zM190 445h1v1h-1zM191 444h2v1h-2zM193 443h1v1h-1zM194 442h1v1h-1zM195 441h1v1h-1zM196 440h2v1h-2zM198 439h1v1h-1zM199 438h1v1h-1zM200 437h1v1h-1zM201 436h2v1h-2zM203 435h1v1h-1zM204 434h1v1h-1zM205 433h1v1h-1zM206 432h2v1h-2zM208 431h1v1h-1zM209 430h1v1h-1zM210 429h1v1h-1zM211 428h1v1h-1zM212 427h2v1h-2zM214 426h1v1h-1zM215 425h1v1h-1zM216 424h1v1h-1zM217 423h1v1h-1zM218 422h1v1h-1zM219 421h2v1h-2zM221 420h1v1h-1zM222 419h1v1h-1zM223 418h1v1h-1zM224 417h1v1h-1zM225 416h1v1h-1zM226 415h1v1h-1zM227 414h1v1h-1zM228 413h2v1h-2zM230 412h1v1h-1zM231 411h1v1h-1zM232 410h1v1h-1zM233 409h1v1h-1zM234 408h1v1h-1zM235 407h1v1h-1zM236 406h1v1h-1zM237 405h1v1h-1zM238 404h1v1h-1zM239 403h1v1h-1zM240 402h1v1h-1zM241 401h1v1h-1zM242 400h1v1h-1zM243 399h1v1h-1zM244 398h1v1h-1zM245 397h1v1h-1zM246 396h1v1h-1zM247 395h1v1h-1zM248 394h1v1h-1zM249 393h1v1h-1zM250 392h1v1h-1zM251 391h1v1h-1zM252 390h1v1h-1zM253 389h1v1h-1zM254 388h1v1h-1zM255 387h1v1h-1zM256 386h1v1h-1zM257 385h1v1h-1zM258 384h1v1h-1zM259 383h1v1h-1zM260 382h1v1h-1zM261 381h1v1h-1zM262 380h1v1h-1zM263 379h1v1h-1zM264 378h1v1h-1zM265 377h1v1h-1zM266 376h1v1h-1zM267 375h1v1h-1zM268 374h1v1h-1zM269 372h1v2h-1zM270 371h1v1h-1zM271 370h1v1h-1zM272 369h1v1h-1zM273 368h1v1h-1zM274 366h1v2h-1zM275 365h1v1h-1zM276 364h1v1h-1zM277 363h1v1h-1zM278 361h1v2h-1zM279 360h1v1h-1zM280 359h1v1h-1zM281 358h1v1h-1zM282 356h1v2h-1zM283 355h1v1h-1zM284 354h1v1h-1zM285 352h1v2h-1zM286 351h1v1h-1zM287 349h1v2h-1zM288 348h1v1h-1zM289 347h1v1h-1zM290 345h1v2h-1zM291 344h1v1h-1zM292 342h1v2h-1zM293 341h1v1h-1zM294 340h1v1h-1zM295 338h1v2h-1zM296 336h1v2h-1zM297 335h1v1h-1zM298 333h1v2h-1zM299 332h1v1h-1zM300 330h1v2h-1zM301 329h1v1h-1zM302 327h1v2h-1zM303 325h1v2h-1zM304 324h1v1h-1zM305 322h1v2h-1zM306 320h1v2h-1zM307 319h1v1h-1zM308 317h1v2h-1zM309 315h1v2h-1zM310 314h1v1h-1zM311 312h1v2h-1zM312 310h1v2h-1zM313 308h1v2h-1zM314 306h1v2h-1zM315 304h1v2h-1zM316 302h1v2h-1zM317 300h1v2h-1zM318 298h1v2h-1zM319 296h1v2h-1zM320 294h1v2h-1zM321 292h1v2h-1zM322 290h1v2h-1zM323 288h1v2h-1zM324 286h1v2h-1zM325 284h1v2h-1zM326 281h1v3h-1zM327 279h1v2h-1zM328 277h1v2h-1zM329 274h1v3h-1zM330 272h1v2h-1zM331 270h1v2h-1zM332 267h1v3h-1zM333 264h1v3h-1zM334 262h1v2h-1zM335 259h1v3h-1zM336 256h1v3h-1zM337 254h1v2h-1zM338 251h1v3h-1zM339 248h1v3h-1zM340 245h1v3h-1zM341 242h1v3h-1zM342 239h1v3h-1zM343 236h1v3h-1zM344 233h1v3h-1zM345 229h1v4h-1zM346 226h1v3h-1zM347 222h1v4h-1zM348 219h1v3h-1zM349 215h1v4h-1zM350 211h1v4h-1zM351 207h1v4h-1zM352 204h1v3h-1zM353 199h1v5h-1zM354 195h1v4h-1zM355 191h1v4h-1zM356 186h1v5h-1zM357 182h1v4h-1zM358 177h1v5h-1zM359 172h1v5h-1zM360 167h1v5h-1zM361 161h1v6h-1zM362 156h1v5h-1zM363 150h1v6h-1zM364 144h1v6h-1zM365 138h1v6h-1zM366 132h1v6h-1zM367 126h1v6h-1zM368 119h1v7h-1zM369 112h1v7h-1zM370 105h1v7h-1zM371 98h1v7h-1zM372 90h1v8h-1zM373 83h1v7h-1zM374 76h1v7h-1zM375 69h1v7h-1zM376 63h1v6h-1zM377 57h1v6h-1zM378 52h1v5h-1zM379 49h1v3h-1zM380 46h3v1h-3zM380 47h1v2h-1zM383 47h1v3h-1zM384 50h1v5h-1zM385 55h1v5h-1zM386 60h1v7h-1zM387 67h1v6h-1zM388 73h1v8h-1zM389 81h1v7h-1zM390 88h1v7h-1zM391 95h1v8h-1zM392 103h1v7h-1zM393 110h1v7h-1zM394 117h1v7h-1zM395 124h1v7h-1zM396 131h1v6h-1zM397 137h1v7h-1zM398 144h1v6h-1zM399 150h1v5h-1zM400 155h1v6h-1zM401 161h1v6h-1zM402 167h1v5h-1zM403 172h1v5h-1zM404 177h1v5h-1zM405 182h1v5h-1zM406 187h1v5h-1zM407 192h1v4h-1zM408 196h1v5h-1zM409 201h1v4h-1zM410 205h1v4h-1zM411 209h1v4h-1zM412 213h1v4h-1zM413 217h1v4h-1zM414 221h1v4h-1zM415 225h1v3h-1zM416 228h1v4h-1zM417 232h1v3h-1zM418 235h1v4h-1zM419 239h1v3h-1zM420 242h1v3h-1zM421 245h1v3h-1zM422 248h1v4h-1zM423 252h1v3h-1zM424 255h1v2h-1zM425 257h1v3h-1zM426 260h1v3h-1zM427 263h1v3h-1zM428 266h1v3h-1zM429 269h1v3h-1zM430 272h1v2h-1zM431 274h1v3h-1zM432 277h1v2h-1zM433 279h1v3h-1zM434 282h1v2h-1zM435 284h1v3h-1zM436 287h1v2h-1zM437 289h1v3h-1zM438 292h1v2h-1zM439 294h1v2h-1zM440 296h1v3h-1zM441 299h1v2h-1zM442 301h1v2h-1zM443 303h1v2h-1zM444 305h1v2h-1zM445 307h1v2h-1zM446 309h1v2h-1zM447 311h1v2h-1zM448 313h1v2h-1zM449 315h1v2h-1zM450 317h1v2h-1zM451 319h1v2h-1zM452 321h1v2h-1zM453 323h1v2h-1zM454 325h1v2h-1zM455 327h1v2h-1zM456 329h1v2h-1zM457 331h1v2h-1zM458 333h1v1h-1zM459 334h1v2h-1zM460 336h1v2h-1zM461 338h1v2h-1zM462 340h1v1h-1zM463 341h1v2h-1zM464 343h1v2h-1zM465 345h1v1h-1zM466 346h1v2h-1zM467 348h1v2h-1zM468 350h1v1h-1zM469 351h1v2h-1zM470 353h1v2h-1zM471 355h1v1h-1zM472 356h1v2h-1zM473 358h1v1h-1zM474 359h1v2h-1zM475 361h1v1h-1zM476 362h1v2h-1zM477 364h1v1h-1zM478 365h1v2h-1zM479 367h1v1h-1zM480 368h1v2h-1zM481 370h1v1h-1zM482 371h1v2h-1zM483 373h1v1h-1zM484 374h1v2h-1zM485 376h1v1h-1zM486 377h1v1h-1zM487 378h1v2h-1zM488 380h1v1h-1zM489 381h1v1h-1zM490 382h1v2h-1zM491 384h1v1h-1zM492 385h1v2h-1zM493 387h1v1h-1zM494 388h1v1h-1zM495 389h1v2h-1zM496 391h1v1h-1zM497 392h1v1h-1zM498 393h1v1h-1zM499 394h1v2h-1zM500 396h1v1h-1zM501 397h1v1h-1zM502 398h1v2h-1zM503 400h1v1h-1zM504 401h1v1h-1zM505 402h1v1h-1zM506 403h1v2h-1zM507 405h1v1h-1zM508 406h1v1h-1zM509 407h1v1h-1zM510 408h1v1h-1zM511 409h1v2h-1zM512 411h1v1h-1zM513 412h1v1h-1zM514 413h1v1h-1zM515 414h1v1h-1zM516 415h1v2h-1zM517 417h1v1h-1zM518 418h1v1h-1zM519 419h1v1h-1zM520 420h1v1h-1zM521 421h1v1h-1zM522 422h1v1h-1zM523 423h1v2h-1zM524 425h1v1h-1zM525 426h1v1h-1zM526 427h1v1h-1zM527 428h1v1h-1zM528 429h1v1h-1zM529 430h1v1h-1zM530 431h1v1h-1zM531 432h1v2h-1zM532 434h1v1h-1zM533 435h1v1h-1zM534 436h1v1h-1zM535 437h1v1h-1zM536 438h1v1h-1zM537 439h1v1h-1zM538 440h1v1h-1zM539 441h1v1h-1zM540 442h1v1h-1zM541 443h1v1h-1zM542 444h1v1h-1zM543 445h1v1h-1zM544 446h1v2h-1zM545 448h1v1h-1zM546 449h1v1h-1zM547 450h1v1h-1zM548 451h1v1h-1zM549 452h1v1h-1zM550 453h1v1h-1zM551 454h1v1h-1zM552 455h1v1h-1zM553 456h1v1h-1zM554 457h1v1h-1zM555 458h1v1h-1zM556 459h1v1h-1zM557 460h1v1h-1zM558 461h1v1h-1zM559 462h1v1h-1zM560 463h1v1h-1zM561 464h1v1h-1zM562 465h1v1h-1zM563 466h1v1h-1zM564 467h1v1h-1zM565 468h1v1h-1zM566 469h1v1h-1zM567 470h1v1h-1zM568 471h1v1h-1zM569 472h1v1h-1zM570 473h1v1h-1zM571 474h1v1h-1zM572 475h1v1h-1zM573 476h1v1h-1zM574 477h1v1h-1zM575 478h1v1h-1zM576 479h1v1h-1zM577 480h1v1h-1zM578 481h1v1h-1zM579 482h1v1h-1zM580 483h1v1h-1zM581 484h1v1h-1zM582 485h1v1h-1zM583 486h1v1h-1zM584 487h1v1h-1zM585 488h1v1h-1zM586 489h1v1h-1zM587 490h1v1h-1zM588 491h1v1h-1zM589 492h1v1h-1zM590 493h1v1h-1zM591 494h1v1h-1zM592 495h1v1h-1zM593 496h1v1h-1zM594 497h1v1h-1zM595 498h1v1h-1zM596 499h1v1h-1zM597 500h1v1h-1zM598 501h1v1h-1zM599 502h1v1h-1zM600 503h2v1h-2zM602 504h1v1h-1zM603 505h1v1h-1zM604 506h1v1h-1zM605 507h1v1h-1zM606 508h1v1h-1zM607 509h1v1h-1zM608 510h1v1h-1zM609 511h1v1h-1zM610 512h1v1h-1zM611 513h1v1h-1zM612 514h1v1h-1zM613 515h2v1h-2zM615 516h1v1h-1zM616 517h1v1h-1zM617 518h1v1h-1zM618 519h1v1h-1zM619 520h1v1h-1zM620 521h1v1h-1zM621 522h1v1h-1zM622 523h1v1h-1zM623 524h1v1h-1zM624 525h1v1h-1zM625 526h2v1h-2zM627 527h1v1h-1zM628 528h1v1h-1zM629 529h1v1h-1zM630 530h1v1h-1zM631 531h1v1h-1zM632 532h1v1h-1zM633 533h1v1h-1zM634 534h1v1h-1zM635 535h1v1h-1zM636 536h2v1h-2zM638 537h1v1h-1zM639 538h1v1h-1zM640 539h1v1h-1zM641 540h1v1h-1zM642 541h1v1h-1zM643 542h1v1h-1zM644 543h2v1h-2z"/>
<path fill="#ff0000" d="M44 56h1v1h-1zM46 56h1v1h-1zM48 56h1v1h-1zM50 56h1v1h-1zM52 57h1v1h-1zM54 57h1v1h-1zM56 57h1v1h-1zM58 57h1v1h-1zM60 57h1v1h-1zM62 57h1v1h-1zM64 57h1v1h-1zM66 58h1v1h-1zM68 58h1v1h-1zM70 58h1v1h-1zM72 58h1v1h-1zM74 58h1v1h-1zM76 58h1v1h-1zM78 58h1v1h-1zM80 59h1v1h-1zM82 59h1v1h-1zM84 59h1v1h-1zM86 59h1v1h-1zM88 59h1v1h-1zM90 59h1v1h-1zM92 59h1v1h-1zM94 60h1v1h-1zM96 60h1v1h-1zM98 60h1v1h-1zM100 60h1v1h-1zM102 60h1v1h-1zM104 60h1v1h-1zM106 61h1v1h-1zM108 61h1v1h-1zM110 61h1v1h-1zM112 61h1v1h-1zM114 61h1v1h-1zM116 61h1v1h-1zM118 62h1v1h-1zM120 62h1v1h-1zM122 62h1v1h-1zM124 62h1v1h-1zM126 62h1v1h-1zM128 62h1v1h-1zM130 63h1v1h-1zM132 63h1v1h-1zM134 63h1v1h-1zM136 63h1v1h-1zM138 63h1v1h-1zM140 64h1v1h-1zM142 64h1v1h-1zM144 64h1v1h-1zM146 64h1v1h-1zM148 64h1v1h-1zM150 65h1v1h-1zM152 65h1v1h-1zM154 65h1v1h-1zM156 65h1v1h-1zM158 65h1v1h-1zM160 66h1v1h-1zM162 66h1v1h-1zM164 66h1v1h-1zM166 66h1v1h-1zM168 66h1v1h-1zM170 67h1v1h-1zM172 67h1v1h-1zM174 67h1v1h-1zM176 67h1v1h-1zM178 68h1v1h-1zM180 68h1v1h-1zM182 68h1v1h-1zM184 68h1v1h-1zM186 68h1v1h-1zM188 69h1v1h-1zM190 69h1v1h-1zM192 69h1v1h-1zM194 69h1v1h-1zM196 70h1v1h-1zM198 70h1v1h-1zM200 70h1v1h-1zM202 70h1v1h-1zM204 71h1v1h-1zM206 71h1v1h-1zM208 71h1v1h-1zM210 71h1v1h-1zM212 72h1v1h-1zM214 72h1v1h-1zM216 72h1v1h-1zM218 73h1v1h-1zM220 73h1v1h-1zM222 73h1v1h-1zM224 73h1v1h-1zM226 74h1v1h-1zM228 74h1v1h-1zM230 74h1v1h-1zM232 75h1v1h-1zM234 75h1v1h-1zM236 75h1v1h-1zM238 76h1v1h-1zM240 76h1v1h-1zM242 76h1v1h-1zM244 77h1v1h-1zM246 77h1v1h-1zM248 77h1v1h-1zM250 78h1v1h-1zM252 78h1v1h-1zM254 78h1v1h-1zM256 79h1v1h-1zM258 79h1v1h-1zM260 79h1v1h-1zM262 80h1v1h-1zM264 80h1v1h-1zM266 81h1v1h-1zM268 81h1v1h-1zM270 81h1v1h-1zM272 82h1v1h-1zM274 82h1v1h-1zM276 83h1v1h-1zM278 83h1v1h-1zM280 84h1v1h-1zM282 84h1v1h-1zM284 85h1v1h-1zM286 85h1v1h-1zM288 86h1v1h-1zM290 86h1v1h-1zM292 87h1v1h-1zM294 87h1v1h-1zM296 88h1v1h-1zM298 88h1v1h-1zM300 89h1v1h-1zM302 89h1v1h-1zM304 90h1v1h-1zM306 91h1v1h-1zM308 91h1v1h-1zM310 92h1v1h-1zM312 93h1v1h-1zM314 94h1v1h-1zM316 94h1v1h-1zM318 95h1v1h-1zM320 96h1v1h-1zM322 97h1v1h-1zM324 98h1v1h-1zM326 99h1v1h-1zM328 100h1v1h-1zM330 101h1v1h-1zM332 102h1v1h-1zM334 103h1v1h-1zM336 105h1v1h-1zM338 106h1v1h-1zM340 107h1v1h-1zM342 109h1v1h-1zM344 111h1v1h-1zM346 113h1v1h-1zM348 115h1v1h-1zM350 117h1v1h-1zM352 119h1v1h-1zM354 121h1v1h-1zM355 123h1v1h-1zM356 125h1v1h-1zM357 127h1v1h-1zM358 129h1v1h-1zM359 131h1v1h-1zM360 133h1v1h-1zM361 135h1v1h-1zM362 137h1v1h-1zM363 139h1v1h-1zM363 141h1v1h-1zM364 143h1v1h-1zM365 145h1v1h-1zM365 147h1v1h-1zM366 149h1v1h-1zM366 151h1v1h-1zM367 153h1v1h-1zM367 155h1v1h-1zM368 157h1v1h-1zM368 159h1v1h-1zM369 161h1v1h-1zM369 163h1v1h-1zM369 165h1v1h-1zM370 167h1v1h-1zM370 169h1v1h-1zM370 171h1v1h-1zM371 173h1v1h-1zM371 175h1v1h-1zM371 177h1v1h-1zM372 179h1v1h-1zM372 181h1v1h-1zM372 183h1v1h-1zM373 185h1v1h-1zM373 187h1v1h-1zM373 189h1v1h-1zM373 191h1v1h-1zM374 193h1v1h-1zM374 195h1v1h-1zM374 197h1v1h-1zM374 199h1v1h-1zM374 201h1v1h-1zM375 203h1v1h-1zM375 205h1v1h-1zM375 207h1v1h-1zM375 209h1v1h-1zM375 211h1v1h-1zM376 213h1v1h-1zM376 215h1v1h-1zM376 217h1v1h-1zM376 219h1v1h-1zM376 221h1v1h-1zM377 223h1v1h-1zM377 225h1v1h-1zM377 227h1v1h-1zM377 229h1v1h-1zM377 231h1v1h-1zM377 233h1v1h-1zM378 235h1v1h-1zM378 237h1v1h-1zM378 239h1v1h-1zM378 241h1v1h-1zM378 243h1v1h-1zM378 245h1v1h-1zM378 247h1v1h-1zM379 249h1v1h-1zM379 251h1v1h-1zM379 253h1v1h-1zM379 255h1v1h-1zM379 257h1v1h-1zM379 259h1v1h-1zM379 261h1v1h-1zM380 263h1v1h-1zM380 265h1v1h-1zM380 267h1v1h-1zM380 269h1v1h-1zM380 271h1v1h-1zM380 273h1v1h-1zM380 275h1v1h-1zM381 277h1v1h-1zM381 279h1v1h-1zM381 281h1v1h-1zM381 283h1v1h-1zM381 285h1v1h-1zM381 287h1v1h-1zM381 289h1v1h-1zM382 291h1v1h-1zM382 293h1v1h-1zM382 295h1v1h-1zM382 297h1v1h-1zM382 299h1v1h-1zM382 301h1v1h-1zM382 303h1v1h-1zM383 305h1v1h-1zM383 307h1v1h-1zM383 309h1v1h-1zM383 311h1v1h-1zM383 313h1v1h-1zM383 315h1v1h-1zM383 317h1v1h-1zM383 319h1v1h-1zM384 321h1v1h-1zM384 323h1v1h-1zM384 325h1v1h-1zM384 327h1v1h-1zM384 329h1v1h-1zM384 331h1v1h-1zM385 333h1v1h-1zM385 335h1v1h-1zM385 337h1v1h-1zM385 339h1v1h-1zM385 341h1v1h-1zM385 343h1v1h-1zM386 345h1v1h-1zM386 347h1v1h-1zM386 349h1v1h-1zM386 351h1v1h-1zM386 353h1v1h-1zM386 355h1v1h-1zM387 357h1v1h-1zM387 359h1v1h-1zM387 361h1v1h-1zM387 363h1v1h-1zM387 365h1v1h-1zM388 367h1v1h-1zM388 369h1v1h-1zM388 371h1v1h-1zM388 373h1v1h-1zM388 375h1v1h-1zM389 377h1v1h-1zM389 379h1v1h-1zM389 381h1v1h-1zM389 383h1v1h-1zM390 385h1v1h-1zM390 387h1v1h-1zM390 389h1v1h-1zM390 391h1v1h-1zM391 393h1v1h-1zM391 395h1v1h-1zM391 397h1v1h-1zM392 399h1v1h-1zM392 401h1v1h-1zM392 403h1v1h-1zM393 405h1v1h-1zM393 407h1v1h-1zM394 409h1v1h-1zM394 411h1v1h-1zM394 413h1v1h-1zM395 415h1v1h-1zM395 417h1v1h-1zM396 419h1v1h-1zM396 421h1v1h-1zM397 423h1v1h-1zM397 425h1v1h-1zM398 427h1v1h-1zM399 429h1v1h-1zM399 431h1v1h-1zM400 433h1v1h-1zM401 435h1v1h-1zM402 437h1v1h-1zM403 439h1v1h-1zM403 441h1v1h-1zM404 443h1v1h-1zM405 445h1v1h-1zM407 447h1v1h-1zM408 449h1v1h-1zM409 451h1v1h-1zM411 453h1v1h-1zM412 455h1v1h-1zM414 457h1v1h-1zM416 459h1v1h-1zM418 461h1v1h-1zM420 463h1v1h-1zM422 465h1v1h-1zM424 467h1v1h-1zM426 469h1v1h-1zM428 470h1v1h-1zM430 471h1v1h-1zM432 473h1v1h-1zM434 474h1v1h-1zM436 475h1v1h-1zM438 476h1v1h-1zM440 477h1v1h-1zM442 478h1v1h-1zM444 479h1v1h-1zM446 480h1v1h-1zM448 481h1v1h-1zM450 482h1v1h-1zM452 482h1v1h-1zM454 483h1v1h-1zM456 484h1v1h-1zM458 485h1v1h-1zM460 486h1v1h-1zM462 486h1v1h-1zM464 487h1v1h-1zM466 488h1v1h-1zM468 489h1v1h-1zM470 489h1v1h-1zM472 490h1v1h-1zM474 491h1v1h-1zM476 491h1v1h-1zM478 492h1v1h-1zM480 493h1v1h-1zM482 493h1v1h-1zM484 494h1v1h-1zM486 494h1v1h-1zM488 495h1v1h-1zM490 496h1v1h-1zM492 496h1v1h-1zM494 497h1v1h-1zM496 498h1v1h-1zM498 498h1v1h-1zM500 499h1v1h-1zM502 499h1v1h-1zM504 500h1v1h-1zM506 500h1v1h-1zM508 501h1v1h-1zM510 502h1v1h-1zM512 502h1v1h-1zM514 503h1v1h-1zM516 503h1v1h-1zM518 504h1v1h-1zM520 504h1v1h-1zM522 505h1v1h-1zM524 506h1v1h-1zM526 506h1v1h-1zM528 507h1v1h-1zM530 507h1v1h-1zM532 508h1v1h-1zM534 508h1v1h-1zM536 509h1v1h-1zM538 509h1v1h-1zM540 510h1v1h-1zM542 511h1v1h-1zM544 511h1v1h-1zM546 512h1v1h-1zM548 512h1v1h-1zM550 513h1v1h-1zM552 513h1v1h-1zM554 514h1v1h-1zM556 514h1v1h-1zM558 515h1v1h-1zM560 516h1v1h-1zM562 516h1v1h-1zM564 517h1v1h-1zM566 517h1v1h-1zM568 518h1v1h-1zM570 518h1v1h-1zM572 519h1v1h-1zM574 519h1v1h-1zM576 520h1v1h-1zM578 520h1v1h-1zM580 521h1v1h-1zM582 521h1v1h-1zM584 522h1v1h-1zM586 523h1v1h-1zM588 523h1v1h-1zM590 524h1v1h-1zM592 524h1v1h-1zM594 525h1v1h-1zM596 525h1v1h-1zM598 526h1v1h-1zM600 526h1v1h-1zM602 527h1v1h-1zM604 527h1v1h-1zM606 528h1v1h-1zM608 528h1v1h-1zM610 529h1v1h-1zM612 529h1v1h-1zM614 530h1v1h-1zM616 530h1v1h-1zM618 531h1v1h-1zM620 532h1v1h-1zM622 532h1v1h-1zM624 533h1v1h-1zM626 533h1v1h-1zM628 534h1v1h-1zM630 534h1v1h-1zM632 535h1v1h-1zM634 535h1v1h-1zM636 536h1v1h-1zM638 536h1v1h-1zM640 537h1v1h-1zM642 537h1v1h-1zM644 538h1v1h-1z"/>
</svg>
<svg class="abs" style="left:722px;top:146px" width="691" height="574" viewBox="0 0 691 574" font-family="Liberation Sans,sans-serif" font-weight="bold" font-size="13.7" fill="#c6c6c6">
<text transform="translate(36.3,22.6) scale(0.932,1)" text-anchor="end">18dB</text>
<text transform="translate(685.6,22.4) scale(0.932,1)" text-anchor="end">100°</text>
<text transform="translate(36.3,66.6) scale(0.932,1)" text-anchor="end">15dB</text>
<text transform="translate(685.6,66.4) scale(0.932,1)" text-anchor="end">80°</text>
<text transform="translate(36.3,110.6) scale(0.932,1)" text-anchor="end">12dB</text>
<text transform="translate(685.6,110.4) scale(0.932,1)" text-anchor="end">60°</text>
<text transform="translate(36.3,155.6) scale(0.932,1)" text-anchor="end">9dB</text>
<text transform="translate(685.6,155.4) scale(0.932,1)" text-anchor="end">40°</text>
<text transform="translate(36.3,199.6) scale(0.932,1)" text-anchor="end">6dB</text>
<text transform="translate(685.6,199.4) scale(0.932,1)" text-anchor="end">20°</text>
<text transform="translate(36.3,243.6) scale(0.932,1)" text-anchor="end">3dB</text>
<text transform="translate(685.6,243.4) scale(0.932,1)" text-anchor="end">0°</text>
<text transform="translate(36.3,287.6) scale(0.932,1)" text-anchor="end">0dB</text>
<text transform="translate(685.6,287.4) scale(0.932,1)" text-anchor="end">-20°</text>
<text transform="translate(36.3,331.6) scale(0.932,1)" text-anchor="end">-3dB</text>
<text transform="translate(685.6,331.4) scale(0.932,1)" text-anchor="end">-40°</text>
<text transform="translate(36.3,375.6) scale(0.932,1)" text-anchor="end">-6dB</text>
<text transform="translate(685.6,375.4) scale(0.932,1)" text-anchor="end">-60°</text>
<text transform="translate(36.3,420.6) scale(0.932,1)" text-anchor="end">-9dB</text>
<text transform="translate(685.6,420.4) scale(0.932,1)" text-anchor="end">-80°</text>
<text transform="translate(36.3,464.6) scale(0.932,1)" text-anchor="end">-12dB</text>
<text transform="translate(685.6,464.4) scale(0.932,1)" text-anchor="end">-100°</text>
<text transform="translate(36.3,508.6) scale(0.932,1)" text-anchor="end">-15dB</text>
<text transform="translate(685.6,508.4) scale(0.932,1)" text-anchor="end">-120°</text>
<text transform="translate(36.3,552.6) scale(0.932,1)" text-anchor="end">-18dB</text>
<text transform="translate(685.6,552.4) scale(0.932,1)" text-anchor="end">-140°</text>
<text transform="translate(43.4,569.1) scale(0.932,1)" text-anchor="middle">1.0MHz</text>
<text transform="translate(211.4,569.1) scale(0.932,1)" text-anchor="middle">1.9MHz</text>
<text transform="translate(312.4,569.1) scale(0.932,1)" text-anchor="middle">2.8MHz</text>
<text transform="translate(384.4,569.1) scale(0.932,1)" text-anchor="middle">3.7MHz</text>
<text transform="translate(488.4,569.1) scale(0.932,1)" text-anchor="middle">5.5MHz</text>
<text transform="translate(562.4,569.1) scale(0.932,1)" text-anchor="middle">7.3MHz</text>
<text transform="translate(644.4,569.1) scale(0.932,1)" text-anchor="middle">10.0MHz</text>
<text transform="translate(320.6,13.1) scale(0.932,1)" text-anchor="start" fill="#00ff00">V(n001)</text>
</svg>
</body></html>
